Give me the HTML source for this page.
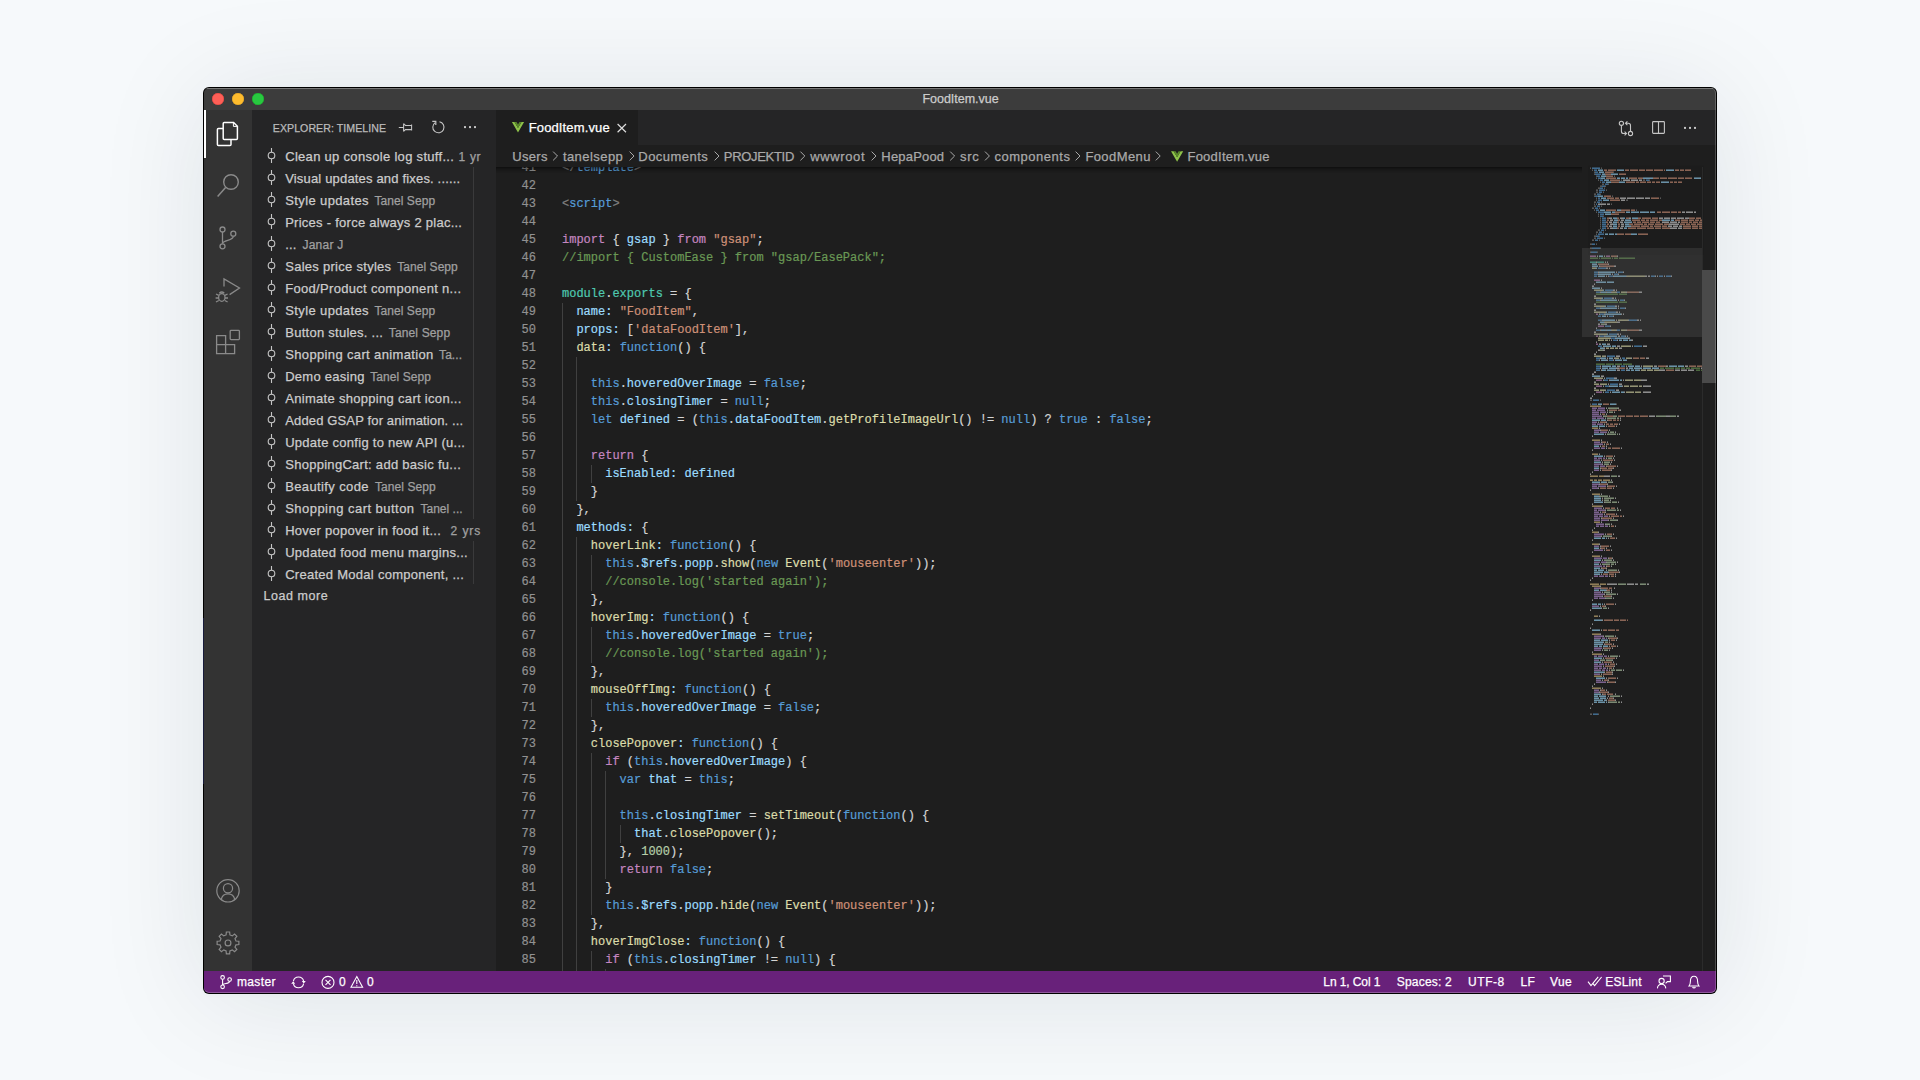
<!DOCTYPE html><html><head><meta charset="utf-8"><style>
*{margin:0;padding:0;box-sizing:border-box}
html,body{width:1920px;height:1080px;overflow:hidden;background:#f6f9fb;font-family:"Liberation Sans",sans-serif}
#bgshade{position:absolute;left:0;top:0;width:1920px;height:1080px;background:#f6f9fb}
#win{position:absolute;left:204px;top:88px;width:1512px;height:905px;border-radius:5px;overflow:hidden;background:#1e1e1e;box-shadow:0 0 0 1px #000, 0 6px 110px rgba(10,30,50,0.10), 0 1px 6px rgba(10,30,50,0.03)}
#o{position:absolute;left:-204px;top:-88px;width:1920px;height:1080px}
.r{position:absolute}
.t{position:absolute;white-space:pre;line-height:16px;-webkit-text-stroke:0.25px currentColor}
.code{font-family:"Liberation Mono",monospace;font-size:12px;white-space:pre;line-height:18px;-webkit-text-stroke:0.2px currentColor}
.ln{position:absolute;left:476px;width:60px;text-align:right;color:#919191;height:18px}
.cl{position:absolute;left:562px;height:18px}
.ig{position:absolute;width:1px;height:18px;background:#404040}
svg{position:absolute;left:0;top:0;overflow:visible}
</style></head><body><div id="bgshade"></div><div id="win"><div id="o"><div class="r" style="left:203px;top:87px;width:1514px;height:23px;background:#3c3c3c;"></div><div class="r" style="left:203px;top:88px;width:1514px;height:1px;background:#787878;"></div><div class="r" style="left:204px;top:110px;width:48px;height:861px;background:#333333;"></div><div class="r" style="left:252px;top:110px;width:244px;height:861px;background:#252526;"></div><div class="r" style="left:496px;top:110px;width:1221px;height:35px;background:#252526;"></div><div class="r" style="left:496px;top:110px;width:142px;height:35px;background:#1e1e1e;"></div><div class="r" style="left:496px;top:145px;width:1221px;height:22px;background:#1e1e1e;"></div><div class="r" style="left:496px;top:167px;width:1221px;height:804px;background:#1e1e1e;"></div><div class="r" style="left:203px;top:971px;width:1514px;height:23px;background:#68217a;"></div><div class="r" style="left:212px;top:93px;width:12px;height:12px;border-radius:50%;background:#fe5f57;box-shadow:inset 0 0 0 0.5px #e0443e"></div><div class="r" style="left:232px;top:93px;width:12px;height:12px;border-radius:50%;background:#febc2e;box-shadow:inset 0 0 0 0.5px #dea123"></div><div class="r" style="left:252px;top:93px;width:12px;height:12px;border-radius:50%;background:#28c840;box-shadow:inset 0 0 0 0.5px #1aab29"></div><div class="r" style="left:204px;top:110px;width:2px;height:48px;background:#ffffff;"></div><div class="r" style="left:496px;top:167px;width:1221px;height:804px;overflow:hidden"><div class="r" style="left:-496px;top:-167px;width:1920px;height:1080px"><div class="ln code" style="top:159px">41</div><div class="cl code" style="top:159px"><span style="color:#808080">&lt;/</span><span style="color:#569cd6">template</span><span style="color:#808080">&gt;</span></div><div class="ln code" style="top:177px">42</div><div class="cl code" style="top:177px"></div><div class="ln code" style="top:195px">43</div><div class="cl code" style="top:195px"><span style="color:#808080">&lt;</span><span style="color:#569cd6">script</span><span style="color:#808080">&gt;</span></div><div class="ln code" style="top:213px">44</div><div class="cl code" style="top:213px"></div><div class="ln code" style="top:231px">45</div><div class="cl code" style="top:231px"><span style="color:#c586c0">import</span><span style="color:#d4d4d4"> { </span><span style="color:#9cdcfe">gsap</span><span style="color:#d4d4d4"> } </span><span style="color:#c586c0">from</span><span style="color:#d4d4d4"> </span><span style="color:#ce9178">&quot;gsap&quot;</span><span style="color:#d4d4d4">;</span></div><div class="ln code" style="top:249px">46</div><div class="cl code" style="top:249px"><span style="color:#6a9955">//import { CustomEase } from &quot;gsap/EasePack&quot;;</span></div><div class="ln code" style="top:267px">47</div><div class="cl code" style="top:267px"></div><div class="ln code" style="top:285px">48</div><div class="cl code" style="top:285px"><span style="color:#4ec9b0">module</span><span style="color:#d4d4d4">.</span><span style="color:#4ec9b0">exports</span><span style="color:#d4d4d4"> = {</span></div><div class="ln code" style="top:303px">49</div><div class="ig" style="top:303px;left:562px"></div><div class="cl code" style="top:303px"><span style="color:#d4d4d4">  </span><span style="color:#9cdcfe">name</span><span style="color:#9cdcfe">:</span><span style="color:#d4d4d4"> </span><span style="color:#ce9178">&quot;FoodItem&quot;</span><span style="color:#d4d4d4">,</span></div><div class="ln code" style="top:321px">50</div><div class="ig" style="top:321px;left:562px"></div><div class="cl code" style="top:321px"><span style="color:#d4d4d4">  </span><span style="color:#9cdcfe">props</span><span style="color:#9cdcfe">:</span><span style="color:#d4d4d4"> [</span><span style="color:#ce9178">&#x27;dataFoodItem&#x27;</span><span style="color:#d4d4d4">],</span></div><div class="ln code" style="top:339px">51</div><div class="ig" style="top:339px;left:562px"></div><div class="cl code" style="top:339px"><span style="color:#d4d4d4">  </span><span style="color:#dcdcaa">data</span><span style="color:#9cdcfe">:</span><span style="color:#d4d4d4"> </span><span style="color:#569cd6">function</span><span style="color:#d4d4d4">() {</span></div><div class="ln code" style="top:357px">52</div><div class="ig" style="top:357px;left:562px"></div><div class="ig" style="top:357px;left:576px"></div><div class="cl code" style="top:357px"></div><div class="ln code" style="top:375px">53</div><div class="ig" style="top:375px;left:562px"></div><div class="ig" style="top:375px;left:576px"></div><div class="cl code" style="top:375px"><span style="color:#d4d4d4">    </span><span style="color:#569cd6">this</span><span style="color:#d4d4d4">.</span><span style="color:#9cdcfe">hoveredOverImage</span><span style="color:#d4d4d4"> = </span><span style="color:#569cd6">false</span><span style="color:#d4d4d4">;</span></div><div class="ln code" style="top:393px">54</div><div class="ig" style="top:393px;left:562px"></div><div class="ig" style="top:393px;left:576px"></div><div class="cl code" style="top:393px"><span style="color:#d4d4d4">    </span><span style="color:#569cd6">this</span><span style="color:#d4d4d4">.</span><span style="color:#9cdcfe">closingTimer</span><span style="color:#d4d4d4"> = </span><span style="color:#569cd6">null</span><span style="color:#d4d4d4">;</span></div><div class="ln code" style="top:411px">55</div><div class="ig" style="top:411px;left:562px"></div><div class="ig" style="top:411px;left:576px"></div><div class="cl code" style="top:411px"><span style="color:#d4d4d4">    </span><span style="color:#569cd6">let</span><span style="color:#d4d4d4"> </span><span style="color:#9cdcfe">defined</span><span style="color:#d4d4d4"> = (</span><span style="color:#569cd6">this</span><span style="color:#d4d4d4">.</span><span style="color:#9cdcfe">dataFoodItem</span><span style="color:#d4d4d4">.</span><span style="color:#dcdcaa">getProfileImageUrl</span><span style="color:#d4d4d4">() != </span><span style="color:#569cd6">null</span><span style="color:#d4d4d4">) ? </span><span style="color:#569cd6">true</span><span style="color:#d4d4d4"> : </span><span style="color:#569cd6">false</span><span style="color:#d4d4d4">;</span></div><div class="ln code" style="top:429px">56</div><div class="ig" style="top:429px;left:562px"></div><div class="ig" style="top:429px;left:576px"></div><div class="cl code" style="top:429px"></div><div class="ln code" style="top:447px">57</div><div class="ig" style="top:447px;left:562px"></div><div class="ig" style="top:447px;left:576px"></div><div class="cl code" style="top:447px"><span style="color:#d4d4d4">    </span><span style="color:#c586c0">return</span><span style="color:#d4d4d4"> {</span></div><div class="ln code" style="top:465px">58</div><div class="ig" style="top:465px;left:562px"></div><div class="ig" style="top:465px;left:576px"></div><div class="ig" style="top:465px;left:591px"></div><div class="cl code" style="top:465px"><span style="color:#d4d4d4">      </span><span style="color:#9cdcfe">isEnabled</span><span style="color:#9cdcfe">:</span><span style="color:#d4d4d4"> </span><span style="color:#9cdcfe">defined</span></div><div class="ln code" style="top:483px">59</div><div class="ig" style="top:483px;left:562px"></div><div class="ig" style="top:483px;left:576px"></div><div class="cl code" style="top:483px"><span style="color:#d4d4d4">    }</span></div><div class="ln code" style="top:501px">60</div><div class="ig" style="top:501px;left:562px"></div><div class="cl code" style="top:501px"><span style="color:#d4d4d4">  },</span></div><div class="ln code" style="top:519px">61</div><div class="ig" style="top:519px;left:562px"></div><div class="cl code" style="top:519px"><span style="color:#d4d4d4">  </span><span style="color:#9cdcfe">methods</span><span style="color:#9cdcfe">:</span><span style="color:#d4d4d4"> {</span></div><div class="ln code" style="top:537px">62</div><div class="ig" style="top:537px;left:562px"></div><div class="ig" style="top:537px;left:576px"></div><div class="cl code" style="top:537px"><span style="color:#d4d4d4">    </span><span style="color:#dcdcaa">hoverLink</span><span style="color:#9cdcfe">:</span><span style="color:#d4d4d4"> </span><span style="color:#569cd6">function</span><span style="color:#d4d4d4">() {</span></div><div class="ln code" style="top:555px">63</div><div class="ig" style="top:555px;left:562px"></div><div class="ig" style="top:555px;left:576px"></div><div class="ig" style="top:555px;left:591px"></div><div class="cl code" style="top:555px"><span style="color:#d4d4d4">      </span><span style="color:#569cd6">this</span><span style="color:#d4d4d4">.</span><span style="color:#9cdcfe">$refs</span><span style="color:#d4d4d4">.</span><span style="color:#9cdcfe">popp</span><span style="color:#d4d4d4">.</span><span style="color:#dcdcaa">show</span><span style="color:#d4d4d4">(</span><span style="color:#569cd6">new</span><span style="color:#d4d4d4"> </span><span style="color:#dcdcaa">Event</span><span style="color:#d4d4d4">(</span><span style="color:#ce9178">&#x27;mouseenter&#x27;</span><span style="color:#d4d4d4">));</span></div><div class="ln code" style="top:573px">64</div><div class="ig" style="top:573px;left:562px"></div><div class="ig" style="top:573px;left:576px"></div><div class="ig" style="top:573px;left:591px"></div><div class="cl code" style="top:573px"><span style="color:#d4d4d4">      </span><span style="color:#6a9955">//console.log(&#x27;started again&#x27;);</span></div><div class="ln code" style="top:591px">65</div><div class="ig" style="top:591px;left:562px"></div><div class="ig" style="top:591px;left:576px"></div><div class="cl code" style="top:591px"><span style="color:#d4d4d4">    },</span></div><div class="ln code" style="top:609px">66</div><div class="ig" style="top:609px;left:562px"></div><div class="ig" style="top:609px;left:576px"></div><div class="cl code" style="top:609px"><span style="color:#d4d4d4">    </span><span style="color:#dcdcaa">hoverImg</span><span style="color:#9cdcfe">:</span><span style="color:#d4d4d4"> </span><span style="color:#569cd6">function</span><span style="color:#d4d4d4">() {</span></div><div class="ln code" style="top:627px">67</div><div class="ig" style="top:627px;left:562px"></div><div class="ig" style="top:627px;left:576px"></div><div class="ig" style="top:627px;left:591px"></div><div class="cl code" style="top:627px"><span style="color:#d4d4d4">      </span><span style="color:#569cd6">this</span><span style="color:#d4d4d4">.</span><span style="color:#9cdcfe">hoveredOverImage</span><span style="color:#d4d4d4"> = </span><span style="color:#569cd6">true</span><span style="color:#d4d4d4">;</span></div><div class="ln code" style="top:645px">68</div><div class="ig" style="top:645px;left:562px"></div><div class="ig" style="top:645px;left:576px"></div><div class="ig" style="top:645px;left:591px"></div><div class="cl code" style="top:645px"><span style="color:#d4d4d4">      </span><span style="color:#6a9955">//console.log(&#x27;started again&#x27;);</span></div><div class="ln code" style="top:663px">69</div><div class="ig" style="top:663px;left:562px"></div><div class="ig" style="top:663px;left:576px"></div><div class="cl code" style="top:663px"><span style="color:#d4d4d4">    },</span></div><div class="ln code" style="top:681px">70</div><div class="ig" style="top:681px;left:562px"></div><div class="ig" style="top:681px;left:576px"></div><div class="cl code" style="top:681px"><span style="color:#d4d4d4">    </span><span style="color:#dcdcaa">mouseOffImg</span><span style="color:#9cdcfe">:</span><span style="color:#d4d4d4"> </span><span style="color:#569cd6">function</span><span style="color:#d4d4d4">() {</span></div><div class="ln code" style="top:699px">71</div><div class="ig" style="top:699px;left:562px"></div><div class="ig" style="top:699px;left:576px"></div><div class="ig" style="top:699px;left:591px"></div><div class="cl code" style="top:699px"><span style="color:#d4d4d4">      </span><span style="color:#569cd6">this</span><span style="color:#d4d4d4">.</span><span style="color:#9cdcfe">hoveredOverImage</span><span style="color:#d4d4d4"> = </span><span style="color:#569cd6">false</span><span style="color:#d4d4d4">;</span></div><div class="ln code" style="top:717px">72</div><div class="ig" style="top:717px;left:562px"></div><div class="ig" style="top:717px;left:576px"></div><div class="cl code" style="top:717px"><span style="color:#d4d4d4">    },</span></div><div class="ln code" style="top:735px">73</div><div class="ig" style="top:735px;left:562px"></div><div class="ig" style="top:735px;left:576px"></div><div class="cl code" style="top:735px"><span style="color:#d4d4d4">    </span><span style="color:#dcdcaa">closePopover</span><span style="color:#9cdcfe">:</span><span style="color:#d4d4d4"> </span><span style="color:#569cd6">function</span><span style="color:#d4d4d4">() {</span></div><div class="ln code" style="top:753px">74</div><div class="ig" style="top:753px;left:562px"></div><div class="ig" style="top:753px;left:576px"></div><div class="ig" style="top:753px;left:591px"></div><div class="cl code" style="top:753px"><span style="color:#d4d4d4">      </span><span style="color:#c586c0">if</span><span style="color:#d4d4d4"> (</span><span style="color:#569cd6">this</span><span style="color:#d4d4d4">.</span><span style="color:#9cdcfe">hoveredOverImage</span><span style="color:#d4d4d4">) {</span></div><div class="ln code" style="top:771px">75</div><div class="ig" style="top:771px;left:562px"></div><div class="ig" style="top:771px;left:576px"></div><div class="ig" style="top:771px;left:591px"></div><div class="ig" style="top:771px;left:605px"></div><div class="cl code" style="top:771px"><span style="color:#d4d4d4">        </span><span style="color:#569cd6">var</span><span style="color:#d4d4d4"> </span><span style="color:#9cdcfe">that</span><span style="color:#d4d4d4"> = </span><span style="color:#569cd6">this</span><span style="color:#d4d4d4">;</span></div><div class="ln code" style="top:789px">76</div><div class="ig" style="top:789px;left:562px"></div><div class="ig" style="top:789px;left:576px"></div><div class="ig" style="top:789px;left:591px"></div><div class="ig" style="top:789px;left:605px"></div><div class="cl code" style="top:789px"></div><div class="ln code" style="top:807px">77</div><div class="ig" style="top:807px;left:562px"></div><div class="ig" style="top:807px;left:576px"></div><div class="ig" style="top:807px;left:591px"></div><div class="ig" style="top:807px;left:605px"></div><div class="cl code" style="top:807px"><span style="color:#d4d4d4">        </span><span style="color:#569cd6">this</span><span style="color:#d4d4d4">.</span><span style="color:#9cdcfe">closingTimer</span><span style="color:#d4d4d4"> = </span><span style="color:#dcdcaa">setTimeout</span><span style="color:#d4d4d4">(</span><span style="color:#569cd6">function</span><span style="color:#d4d4d4">() {</span></div><div class="ln code" style="top:825px">78</div><div class="ig" style="top:825px;left:562px"></div><div class="ig" style="top:825px;left:576px"></div><div class="ig" style="top:825px;left:591px"></div><div class="ig" style="top:825px;left:605px"></div><div class="ig" style="top:825px;left:620px"></div><div class="cl code" style="top:825px"><span style="color:#d4d4d4">          </span><span style="color:#9cdcfe">that</span><span style="color:#d4d4d4">.</span><span style="color:#dcdcaa">closePopover</span><span style="color:#d4d4d4">();</span></div><div class="ln code" style="top:843px">79</div><div class="ig" style="top:843px;left:562px"></div><div class="ig" style="top:843px;left:576px"></div><div class="ig" style="top:843px;left:591px"></div><div class="ig" style="top:843px;left:605px"></div><div class="cl code" style="top:843px"><span style="color:#d4d4d4">        }, </span><span style="color:#b5cea8">1000</span><span style="color:#d4d4d4">);</span></div><div class="ln code" style="top:861px">80</div><div class="ig" style="top:861px;left:562px"></div><div class="ig" style="top:861px;left:576px"></div><div class="ig" style="top:861px;left:591px"></div><div class="ig" style="top:861px;left:605px"></div><div class="cl code" style="top:861px"><span style="color:#d4d4d4">        </span><span style="color:#c586c0">return</span><span style="color:#d4d4d4"> </span><span style="color:#569cd6">false</span><span style="color:#d4d4d4">;</span></div><div class="ln code" style="top:879px">81</div><div class="ig" style="top:879px;left:562px"></div><div class="ig" style="top:879px;left:576px"></div><div class="ig" style="top:879px;left:591px"></div><div class="cl code" style="top:879px"><span style="color:#d4d4d4">      }</span></div><div class="ln code" style="top:897px">82</div><div class="ig" style="top:897px;left:562px"></div><div class="ig" style="top:897px;left:576px"></div><div class="ig" style="top:897px;left:591px"></div><div class="cl code" style="top:897px"><span style="color:#d4d4d4">      </span><span style="color:#569cd6">this</span><span style="color:#d4d4d4">.</span><span style="color:#9cdcfe">$refs</span><span style="color:#d4d4d4">.</span><span style="color:#9cdcfe">popp</span><span style="color:#d4d4d4">.</span><span style="color:#dcdcaa">hide</span><span style="color:#d4d4d4">(</span><span style="color:#569cd6">new</span><span style="color:#d4d4d4"> </span><span style="color:#dcdcaa">Event</span><span style="color:#d4d4d4">(</span><span style="color:#ce9178">&#x27;mouseenter&#x27;</span><span style="color:#d4d4d4">));</span></div><div class="ln code" style="top:915px">83</div><div class="ig" style="top:915px;left:562px"></div><div class="ig" style="top:915px;left:576px"></div><div class="cl code" style="top:915px"><span style="color:#d4d4d4">    },</span></div><div class="ln code" style="top:933px">84</div><div class="ig" style="top:933px;left:562px"></div><div class="ig" style="top:933px;left:576px"></div><div class="cl code" style="top:933px"><span style="color:#d4d4d4">    </span><span style="color:#dcdcaa">hoverImgClose</span><span style="color:#9cdcfe">:</span><span style="color:#d4d4d4"> </span><span style="color:#569cd6">function</span><span style="color:#d4d4d4">() {</span></div><div class="ln code" style="top:951px">85</div><div class="ig" style="top:951px;left:562px"></div><div class="ig" style="top:951px;left:576px"></div><div class="ig" style="top:951px;left:591px"></div><div class="cl code" style="top:951px"><span style="color:#d4d4d4">      </span><span style="color:#c586c0">if</span><span style="color:#d4d4d4"> (</span><span style="color:#569cd6">this</span><span style="color:#d4d4d4">.</span><span style="color:#9cdcfe">closingTimer</span><span style="color:#d4d4d4"> != </span><span style="color:#569cd6">null</span><span style="color:#d4d4d4">) {</span></div><div class="ln code" style="top:969px">86</div><div class="ig" style="top:969px;left:562px"></div><div class="ig" style="top:969px;left:576px"></div><div class="ig" style="top:969px;left:591px"></div><div class="ig" style="top:969px;left:605px"></div><div class="cl code" style="top:969px"><span style="color:#d4d4d4">        </span><span style="color:#dcdcaa">clearTimeout</span><span style="color:#d4d4d4">(</span><span style="color:#569cd6">this</span><span style="color:#d4d4d4">.</span><span style="color:#9cdcfe">closingTimer</span><span style="color:#d4d4d4">);</span></div></div></div><div class="r" style="left:496px;top:167px;width:1086px;height:6px;background:transparent;box-shadow:inset 0 6px 6px -6px #000"></div><div class="r" style="left:473px;top:167px;width:1px;height:352px;background:#3a3a3b;"></div><div class="r" style="left:473px;top:541px;width:1px;height:43px;background:#3a3a3b;"></div><div class="r" style="left:1702px;top:167px;width:14px;height:804px;background:#1e1e1e;box-shadow:inset 1px 0 0 #2b2b2b"></div><div class="r" style="left:1702px;top:270px;width:14px;height:113px;background:#4a4a4a;"></div><svg width="1920" height="1080"><circle cx="271.5" cy="155.5" r="3.3" fill="none" stroke="#c5c5c5" stroke-width="1.1"/><path d="M271.5 148.0 V152.2 M271.5 158.8 V163.0" stroke="#c5c5c5" stroke-width="1.1"/><circle cx="271.5" cy="177.5" r="3.3" fill="none" stroke="#c5c5c5" stroke-width="1.1"/><path d="M271.5 170.0 V174.2 M271.5 180.8 V185.0" stroke="#c5c5c5" stroke-width="1.1"/><circle cx="271.5" cy="199.5" r="3.3" fill="none" stroke="#c5c5c5" stroke-width="1.1"/><path d="M271.5 192.0 V196.2 M271.5 202.8 V207.0" stroke="#c5c5c5" stroke-width="1.1"/><circle cx="271.5" cy="221.5" r="3.3" fill="none" stroke="#c5c5c5" stroke-width="1.1"/><path d="M271.5 214.0 V218.2 M271.5 224.8 V229.0" stroke="#c5c5c5" stroke-width="1.1"/><circle cx="271.5" cy="243.5" r="3.3" fill="none" stroke="#c5c5c5" stroke-width="1.1"/><path d="M271.5 236.0 V240.2 M271.5 246.8 V251.0" stroke="#c5c5c5" stroke-width="1.1"/><circle cx="271.5" cy="265.5" r="3.3" fill="none" stroke="#c5c5c5" stroke-width="1.1"/><path d="M271.5 258.0 V262.2 M271.5 268.8 V273.0" stroke="#c5c5c5" stroke-width="1.1"/><circle cx="271.5" cy="287.5" r="3.3" fill="none" stroke="#c5c5c5" stroke-width="1.1"/><path d="M271.5 280.0 V284.2 M271.5 290.8 V295.0" stroke="#c5c5c5" stroke-width="1.1"/><circle cx="271.5" cy="309.5" r="3.3" fill="none" stroke="#c5c5c5" stroke-width="1.1"/><path d="M271.5 302.0 V306.2 M271.5 312.8 V317.0" stroke="#c5c5c5" stroke-width="1.1"/><circle cx="271.5" cy="331.5" r="3.3" fill="none" stroke="#c5c5c5" stroke-width="1.1"/><path d="M271.5 324.0 V328.2 M271.5 334.8 V339.0" stroke="#c5c5c5" stroke-width="1.1"/><circle cx="271.5" cy="353.5" r="3.3" fill="none" stroke="#c5c5c5" stroke-width="1.1"/><path d="M271.5 346.0 V350.2 M271.5 356.8 V361.0" stroke="#c5c5c5" stroke-width="1.1"/><circle cx="271.5" cy="375.5" r="3.3" fill="none" stroke="#c5c5c5" stroke-width="1.1"/><path d="M271.5 368.0 V372.2 M271.5 378.8 V383.0" stroke="#c5c5c5" stroke-width="1.1"/><circle cx="271.5" cy="397.5" r="3.3" fill="none" stroke="#c5c5c5" stroke-width="1.1"/><path d="M271.5 390.0 V394.2 M271.5 400.8 V405.0" stroke="#c5c5c5" stroke-width="1.1"/><circle cx="271.5" cy="419.5" r="3.3" fill="none" stroke="#c5c5c5" stroke-width="1.1"/><path d="M271.5 412.0 V416.2 M271.5 422.8 V427.0" stroke="#c5c5c5" stroke-width="1.1"/><circle cx="271.5" cy="441.5" r="3.3" fill="none" stroke="#c5c5c5" stroke-width="1.1"/><path d="M271.5 434.0 V438.2 M271.5 444.8 V449.0" stroke="#c5c5c5" stroke-width="1.1"/><circle cx="271.5" cy="463.5" r="3.3" fill="none" stroke="#c5c5c5" stroke-width="1.1"/><path d="M271.5 456.0 V460.2 M271.5 466.8 V471.0" stroke="#c5c5c5" stroke-width="1.1"/><circle cx="271.5" cy="485.5" r="3.3" fill="none" stroke="#c5c5c5" stroke-width="1.1"/><path d="M271.5 478.0 V482.2 M271.5 488.8 V493.0" stroke="#c5c5c5" stroke-width="1.1"/><circle cx="271.5" cy="507.5" r="3.3" fill="none" stroke="#c5c5c5" stroke-width="1.1"/><path d="M271.5 500.0 V504.2 M271.5 510.8 V515.0" stroke="#c5c5c5" stroke-width="1.1"/><circle cx="271.5" cy="529.5" r="3.3" fill="none" stroke="#c5c5c5" stroke-width="1.1"/><path d="M271.5 522.0 V526.2 M271.5 532.8 V537.0" stroke="#c5c5c5" stroke-width="1.1"/><circle cx="271.5" cy="551.5" r="3.3" fill="none" stroke="#c5c5c5" stroke-width="1.1"/><path d="M271.5 544.0 V548.2 M271.5 554.8 V559.0" stroke="#c5c5c5" stroke-width="1.1"/><circle cx="271.5" cy="573.5" r="3.3" fill="none" stroke="#c5c5c5" stroke-width="1.1"/><path d="M271.5 566.0 V570.2 M271.5 576.8 V581.0" stroke="#c5c5c5" stroke-width="1.1"/><path d="M398.8 127.5 H403.6 M403.6 123.4 V131.6 M403.6 123.6 L405.4 125.4 H411.6 M403.6 131.4 L405.4 129.6 H411.6 M411.6 124.4 V130.6" fill="none" stroke="#c5c5c5" stroke-width="1.05"/><path d="M435.2 122.6 A5.6 5.6 0 1 0 439.5 121.7" fill="none" stroke="#c5c5c5" stroke-width="1.1" transform="rotate(0)"/><path d="M432.3 121.4 H435.8 V124.9" fill="none" stroke="#c5c5c5" stroke-width="1.2"/><rect x="464.0" y="126.1" width="2" height="2" fill="#c5c5c5"/><rect x="469.0" y="126.1" width="2" height="2" fill="#c5c5c5"/><rect x="474.0" y="126.1" width="2" height="2" fill="#c5c5c5"/><path d="M224.2 122.4 H233.6 L237.4 126.2 V138.6 Q237.4 139.6 236.4 139.6 H224.2 Q223.2 139.6 223.2 138.6 V123.4 Q223.2 122.4 224.2 122.4 Z" fill="none" stroke="#ffffff" stroke-width="1.5"/><path d="M233.4 122.6 V126.4 H237.2" fill="none" stroke="#ffffff" stroke-width="1"/><path d="M223.2 128.6 H218.4 Q217.4 128.6 217.4 129.6 V144.6 Q217.4 145.6 218.4 145.6 H230 Q231 145.6 231 144.6 V139.6" fill="none" stroke="#ffffff" stroke-width="1.5"/><circle cx="231" cy="182" r="7.3" fill="none" stroke="#8a8a8a" stroke-width="1.4"/><path d="M225.6 187.6 L217.6 196.6" stroke="#8a8a8a" stroke-width="1.5"/><g fill="none" stroke="#8a8a8a" stroke-width="1.3"><circle cx="222.5" cy="229.5" r="2.5"/><circle cx="233.3" cy="233.7" r="2.5"/><circle cx="222.5" cy="246.3" r="2.5"/><path d="M222.5 232 V243.8 M233.3 236.2 C233.3 241 223 239.5 222.5 243.6"/></g><g fill="none" stroke="#8a8a8a" stroke-width="1.3"><path d="M224 286.5 V279 L239.5 288 L229.6 294.6"/><ellipse cx="221.8" cy="297.5" rx="3.2" ry="3.8"/><path d="M219.3 293.2 Q221.8 290.8 224.3 293.2 M216 294 L218.8 295.3 M215.6 298 H218.6 M216 302 L218.8 300.5 M227.6 294 L224.8 295.3 M228 298 H225 M227.6 302 L224.8 300.5"/></g><g fill="none" stroke="#8a8a8a" stroke-width="1.3"><path d="M216.6 335.6 H225.6 V353.6 H216.6 Z M216.6 344.6 H234.6 V353.6 H225.6"/><rect x="230.2" y="330.4" width="9.2" height="9.2" rx="0.8"/></g><g fill="none" stroke="#8a8a8a" stroke-width="1.2"><circle cx="228" cy="890.8" r="11.2"/><circle cx="228" cy="888.2" r="4.6"/><path d="M221.2 899.6 C222 895.5 224.8 893.8 228 893.8 C231.2 893.8 234 895.5 234.8 899.6"/></g><g fill="none" stroke="#8a8a8a" stroke-width="1.2"><path d="M226.09 934.93 L226.36 932.02 L229.64 932.02 L229.91 934.93 L232.28 935.91 L234.54 934.05 L236.85 936.36 L234.99 938.62 L235.97 940.99 L238.88 941.26 L238.88 944.54 L235.97 944.81 L234.99 947.18 L236.85 949.44 L234.54 951.75 L232.28 949.89 L229.91 950.87 L229.64 953.78 L226.36 953.78 L226.09 950.87 L223.72 949.89 L221.46 951.75 L219.15 949.44 L221.01 947.18 L220.03 944.81 L217.12 944.54 L217.12 941.26 L220.03 940.99 L221.01 938.62 L219.15 936.36 L221.46 934.05 L223.72 935.91 Z"/><circle cx="228" cy="942.9" r="2.9"/></g><g transform="translate(511.90 121.90) scale(1.000)"><path d="M0 0 H2.6 L6.1 6 L9.6 0 H12.2 L6.1 10.6 Z" fill="#8dc149"/><path d="M2.6 0 H4.6 L6.1 2.6 L7.6 0 H9.6 L6.1 6 Z" fill="#5a8a2a"/></g><path d="M617.6 124 L626 132.2 M626 124 L617.6 132.2" stroke="#dddddd" stroke-width="1.2"/><g fill="none" stroke="#c5c5c5" stroke-width="1.1"><circle cx="1621.4" cy="123.3" r="2.1"/><circle cx="1630.5" cy="133.5" r="2.1"/><path d="M1621.4 125.4 V131.2 Q1621.4 133.5 1623.7 133.5 H1626.4 M1624.6 131.6 L1626.5 133.5 L1624.6 135.4"/><path d="M1630.5 131.4 V125.6 Q1630.5 123.3 1628.2 123.3 H1625.6 M1627.4 121.4 L1625.5 123.3 L1627.4 125.2"/></g><g fill="none" stroke="#c5c5c5" stroke-width="1.1"><rect x="1652.6" y="121.6" width="11.8" height="11.8" rx="0.8"/><path d="M1658.5 121.6 V133.4"/></g><rect x="1684.0" y="126.9" width="2" height="2" fill="#c5c5c5"/><rect x="1689.0" y="126.9" width="2" height="2" fill="#c5c5c5"/><rect x="1694.0" y="126.9" width="2" height="2" fill="#c5c5c5"/><path d="M553.1 151.6 L557.5 156 L553.1 160.4" fill="none" stroke="#a9a9a9" stroke-width="1"/><path d="M629.6 151.6 L634.0 156 L629.6 160.4" fill="none" stroke="#a9a9a9" stroke-width="1"/><path d="M714.6 151.6 L719.0 156 L714.6 160.4" fill="none" stroke="#a9a9a9" stroke-width="1"/><path d="M800.4 151.6 L804.8 156 L800.4 160.4" fill="none" stroke="#a9a9a9" stroke-width="1"/><path d="M871.6 151.6 L876.0 156 L871.6 160.4" fill="none" stroke="#a9a9a9" stroke-width="1"/><path d="M950.2 151.6 L954.6 156 L950.2 160.4" fill="none" stroke="#a9a9a9" stroke-width="1"/><path d="M985.0 151.6 L989.4 156 L985.0 160.4" fill="none" stroke="#a9a9a9" stroke-width="1"/><path d="M1075.6 151.6 L1080.0 156 L1075.6 160.4" fill="none" stroke="#a9a9a9" stroke-width="1"/><path d="M1155.8 151.6 L1160.2 156 L1155.8 160.4" fill="none" stroke="#a9a9a9" stroke-width="1"/><g transform="translate(1171.00 151.20) scale(1.000)"><path d="M0 0 H2.6 L6.1 6 L9.6 0 H12.2 L6.1 10.6 Z" fill="#8dc149"/><path d="M2.6 0 H4.6 L6.1 2.6 L7.6 0 H9.6 L6.1 6 Z" fill="#5a8a2a"/></g><g><g opacity="0.61" transform="translate(0 1)"><path stroke="#808080" stroke-width="1" d="M1590 167.5h1M1601 167.5h1M1592 169.5h1M1594 171.5h1M1613 171.5h1M1594 173.5h1M1596 175.5h1M1614 175.5h1M1596 177.5h1M1598 179.5h1M1621 179.5h1M1643 179.5h2M1649 179.5h1M1600 181.5h1M1602 183.5h2M1608 183.5h1M1600 185.5h2M1605 185.5h1M1598 187.5h2M1604 187.5h1M1596 189.5h2M1606 189.5h1M1596 191.5h2M1603 191.5h1M1594 193.5h2M1600 193.5h1M1594 195.5h1M1612 195.5h1M1596 197.5h1M1660 197.5h1M1596 199.5h1M1626 199.5h2M1594 201.5h2M1601 201.5h1M1594 203.5h1M1611 203.5h1M1594 205.5h2M1601 205.5h1M1592 207.5h2M1599 207.5h1M1594 209.5h1M1636 209.5h1M1596 211.5h1M1598 213.5h1M1598 215.5h1M1603 215.5h1M1600 217.5h1M1600 219.5h1M1600 221.5h1M1600 223.5h1M1600 225.5h1M1600 227.5h1M1598 229.5h2M1605 229.5h1M1596 231.5h2M1603 231.5h1M1596 233.5h1M1594 235.5h2M1599 235.5h1M1594 237.5h2M1604 237.5h1M1592 239.5h2M1599 239.5h1M1590 243.5h2M1596 243.5h1M1590 247.5h2M1600 247.5h1M1590 251.5h1M1597 251.5h1M1590 399.5h2M1600 399.5h1M1590 403.5h1M1616 403.5h1M1590 713.5h2M1598 713.5h1"/><path stroke="#569cd6" stroke-width="1" d="M1592 167.5h8M1594 169.5h3M1595 171.5h3M1595 173.5h6M1597 175.5h3M1598 177.5h3M1600 179.5h3M1646 179.5h3M1602 181.5h3M1605 183.5h3M1602 185.5h3M1600 187.5h3M1599 189.5h6M1599 191.5h3M1597 193.5h3M1595 195.5h3M1598 197.5h2M1598 199.5h4M1597 201.5h3M1596 203.5h1M1597 205.5h3M1595 207.5h3M1596 209.5h3M1598 211.5h6M1600 213.5h4M1600 215.5h3M1602 217.5h4M1602 219.5h4M1602 221.5h4M1602 223.5h4M1602 225.5h4M1602 227.5h4M1601 229.5h3M1599 231.5h3M1598 233.5h6M1596 235.5h3M1597 237.5h6M1595 239.5h3M1592 243.5h3M1592 247.5h8M1591 251.5h6M1598 267.5h8M1594 271.5h4M1618 271.5h5M1594 273.5h4M1614 273.5h4M1594 275.5h3M1609 275.5h4M1651 275.5h4M1659 275.5h4M1666 275.5h5M1605 289.5h8M1596 291.5h4M1617 291.5h3M1604 297.5h8M1596 299.5h4M1620 299.5h4M1607 305.5h8M1596 307.5h4M1620 307.5h5M1608 311.5h8M1600 313.5h4M1598 315.5h3M1609 315.5h4M1598 319.5h4M1629 319.5h8M1605 325.5h5M1596 329.5h4M1617 329.5h3M1609 333.5h8M1600 335.5h4M1621 335.5h4M1611 337.5h4M1613 339.5h4M1598 345.5h4M1634 345.5h8M1607 355.5h8M1596 357.5h4M1622 357.5h3M1596 359.5h3M1609 359.5h4M1596 365.5h4M1621 365.5h4M1596 367.5h4M1596 369.5h4M1621 369.5h4M1606 377.5h8M1604 379.5h4M1610 383.5h8M1605 385.5h4M1607 389.5h8M1605 391.5h4M1593 399.5h6M1592 403.5h5M1593 713.5h5"/><path stroke="#9cdcfe" stroke-width="1" d="M1598 169.5h5M1617 169.5h7M1666 169.5h8M1599 171.5h5M1602 173.5h3M1611 173.5h7M1601 175.5h5M1601 177.5h4M1617 177.5h3M1621 177.5h4M1626 177.5h2M1643 177.5h10M1694 177.5h7M1604 179.5h5M1606 181.5h5M1619 181.5h6M1661 181.5h8M1598 195.5h5M1601 197.5h5M1603 199.5h6M1600 209.5h5M1617 209.5h4M1604 211.5h7M1612 211.5h3M1626 211.5h4M1631 211.5h8M1640 211.5h9M1650 211.5h5M1605 213.5h6M1613 217.5h4M1623 217.5h2M1632 217.5h6M1614 219.5h4M1625 219.5h6M1662 219.5h8M1671 219.5h3M1613 221.5h4M1624 221.5h8M1613 223.5h4M1625 223.5h4M1613 225.5h4M1625 225.5h6M1613 227.5h4M1624 227.5h3M1605 233.5h3M1609 233.5h5M1615 233.5h2M1631 233.5h6M1599 255.5h4M1592 263.5h4M1596 263.5h1M1592 265.5h5M1597 265.5h1M1596 267.5h1M1599 271.5h16M1599 273.5h12M1598 275.5h7M1614 275.5h12M1596 281.5h9M1605 281.5h1M1607 281.5h7M1592 287.5h7M1599 287.5h1M1603 289.5h1M1601 291.5h5M1607 291.5h4M1602 297.5h1M1601 299.5h16M1605 305.5h1M1601 307.5h16M1606 311.5h1M1605 313.5h16M1602 315.5h4M1603 319.5h12M1600 321.5h4M1601 329.5h5M1607 329.5h4M1607 333.5h1M1605 335.5h12M1616 337.5h12M1619 339.5h3M1623 339.5h5M1629 339.5h2M1602 343.5h4M1604 345.5h7M1612 345.5h4M1600 347.5h4M1601 357.5h5M1609 357.5h4M1601 359.5h6M1615 359.5h7M1623 359.5h4M1602 365.5h9M1612 365.5h4M1628 365.5h6M1635 365.5h5M1669 365.5h8M1678 365.5h6M1602 367.5h6M1609 367.5h7M1629 367.5h4M1634 367.5h8M1643 367.5h8M1652 367.5h7M1602 369.5h4M1607 369.5h9M1627 369.5h3M1631 369.5h3M1635 369.5h4M1592 375.5h8M1610 379.5h9M1620 379.5h2M1610 385.5h8M1619 385.5h3M1612 391.5h8M1621 391.5h3M1598 403.5h4M1610 403.5h6M1592 419.5h8M1601 419.5h5M1592 425.5h6M1599 425.5h6M1594 433.5h10M1594 445.5h5M1594 455.5h9M1594 461.5h7M1594 467.5h5M1592 481.5h8M1601 481.5h5M1594 495.5h5M1594 497.5h7M1594 499.5h7M1594 501.5h9M1594 537.5h7M1602 537.5h3M1606 537.5h1M1594 547.5h5M1594 559.5h7M1594 563.5h5M1594 567.5h6M1594 569.5h3M1598 569.5h6M1594 571.5h9M1604 571.5h4M1594 573.5h6M1594 589.5h5M1600 589.5h6M1592 603.5h5M1598 603.5h3M1602 603.5h1M1592 607.5h9M1594 619.5h8M1592 629.5h8M1594 639.5h6M1601 639.5h7M1594 641.5h9M1594 643.5h9M1594 645.5h4M1599 645.5h3M1603 645.5h5M1594 657.5h8M1594 661.5h7M1594 671.5h10M1596 677.5h9M1594 693.5h7M1594 695.5h4M1599 695.5h7M1594 697.5h5M1600 697.5h6M1594 699.5h9M1604 699.5h2M1594 701.5h3M1598 701.5h7M1606 701.5h1"/><path stroke="#ce9178" stroke-width="1" d="M1604 169.5h3M1608 169.5h8M1625 169.5h4M1630 169.5h8M1639 169.5h6M1646 169.5h7M1654 169.5h9M1664 169.5h1M1675 169.5h4M1680 169.5h4M1685 169.5h6M1605 171.5h8M1605 173.5h6M1619 173.5h7M1606 175.5h7M1606 177.5h10M1629 177.5h8M1638 177.5h5M1653 177.5h6M1660 177.5h7M1668 177.5h9M1678 177.5h6M1685 177.5h7M1610 179.5h10M1611 181.5h8M1626 181.5h9M1636 181.5h3M1640 181.5h6M1647 181.5h4M1652 181.5h3M1656 181.5h4M1670 181.5h3M1674 181.5h3M1678 181.5h4M1604 195.5h7M1607 197.5h7M1615 197.5h4M1651 197.5h8M1610 199.5h10M1606 209.5h10M1621 209.5h9M1631 209.5h4M1615 211.5h10M1657 211.5h4M1662 211.5h8M1671 211.5h6M1678 211.5h3M1611 213.5h8M1607 217.5h2M1617 217.5h2M1626 217.5h3M1638 217.5h3M1642 217.5h9M1652 217.5h6M1689 217.5h6M1696 217.5h5M1607 219.5h2M1618 219.5h2M1632 219.5h8M1641 219.5h4M1646 219.5h3M1650 219.5h8M1659 219.5h3M1675 219.5h5M1681 219.5h7M1689 219.5h5M1695 219.5h4M1700 219.5h2M1606 221.5h2M1617 221.5h2M1633 221.5h3M1637 221.5h4M1642 221.5h7M1650 221.5h5M1656 221.5h4M1681 221.5h7M1689 221.5h3M1693 221.5h5M1699 221.5h3M1607 223.5h2M1618 223.5h2M1629 223.5h4M1634 223.5h9M1644 223.5h3M1648 223.5h6M1655 223.5h8M1664 223.5h5M1680 223.5h5M1686 223.5h4M1691 223.5h5M1697 223.5h5M1606 225.5h2M1618 225.5h2M1631 225.5h9M1641 225.5h8M1650 225.5h3M1654 225.5h7M1662 225.5h5M1683 225.5h8M1692 225.5h6M1699 225.5h3M1607 227.5h2M1617 227.5h2M1628 227.5h8M1637 227.5h9M1647 227.5h7M1655 227.5h6M1662 227.5h8M1683 227.5h8M1692 227.5h6M1699 227.5h3M1617 233.5h7M1625 233.5h6M1638 233.5h10M1611 255.5h6M1598 263.5h10M1600 265.5h14M1627 291.5h12M1627 329.5h12M1633 357.5h6M1640 357.5h5M1658 365.5h8M1689 365.5h7M1697 365.5h5M1619 367.5h6M1666 369.5h8M1603 403.5h6M1609 409.5h8M1618 409.5h2M1602 413.5h3M1607 415.5h6M1618 415.5h7M1626 415.5h7M1634 415.5h5M1640 415.5h8M1608 419.5h4M1613 419.5h3M1617 419.5h2M1600 421.5h6M1606 423.5h3M1610 423.5h3M1614 423.5h4M1608 425.5h7M1601 429.5h7M1602 441.5h4M1606 443.5h3M1602 445.5h3M1608 447.5h3M1612 447.5h8M1606 455.5h7M1603 459.5h10M1607 465.5h9M1601 467.5h6M1608 467.5h5M1602 469.5h9M1600 483.5h7M1608 485.5h7M1600 487.5h6M1607 487.5h5M1605 507.5h5M1611 507.5h4M1602 511.5h3M1606 513.5h9M1611 515.5h8M1620 515.5h2M1602 517.5h10M1611 525.5h3M1607 533.5h5M1610 537.5h5M1601 545.5h8M1601 547.5h4M1606 549.5h4M1609 557.5h3M1607 565.5h3M1602 567.5h4M1609 571.5h10M1603 573.5h5M1609 573.5h5M1611 575.5h3M1601 587.5h7M1609 587.5h3M1607 589.5h3M1604 595.5h7M1606 603.5h8M1602 605.5h3M1604 619.5h9M1614 619.5h5M1620 619.5h6M1627 619.5h1M1603 629.5h4M1608 629.5h7M1616 629.5h3M1609 637.5h8M1611 639.5h4M1605 643.5h7M1611 645.5h5M1604 647.5h7M1605 657.5h10M1604 661.5h8M1610 663.5h5M1605 665.5h9M1609 667.5h3M1606 671.5h6M1603 673.5h9M1608 677.5h8M1604 679.5h4M1608 681.5h7M1601 689.5h4M1600 691.5h8M1603 693.5h3M1607 693.5h6M1609 697.5h4M1608 699.5h7"/><path stroke="#d4d4d4" stroke-width="1" d="M1623 179.5h7M1631 179.5h7M1639 179.5h3M1620 197.5h6M1627 197.5h8M1636 197.5h8M1645 197.5h5M1621 199.5h4M1598 203.5h8M1607 203.5h3M1682 211.5h3M1686 211.5h7M1694 211.5h2M1609 217.5h3M1620 217.5h3M1629 217.5h2M1659 217.5h4M1664 217.5h6M1671 217.5h5M1677 217.5h7M1685 217.5h4M1610 219.5h3M1621 219.5h3M1609 221.5h3M1620 221.5h3M1662 221.5h7M1670 221.5h7M1678 221.5h2M1610 223.5h3M1621 223.5h3M1669 223.5h10M1609 225.5h3M1621 225.5h3M1668 225.5h4M1673 225.5h5M1679 225.5h3M1610 227.5h3M1620 227.5h3M1670 227.5h7M1678 227.5h4M1597 255.5h1M1604 255.5h1M1617 255.5h1M1596 261.5h1M1605 261.5h1M1607 261.5h1M1608 263.5h1M1599 265.5h1M1614 265.5h2M1606 267.5h2M1609 267.5h1M1598 271.5h1M1616 271.5h1M1623 271.5h1M1598 273.5h1M1612 273.5h1M1618 273.5h1M1606 275.5h1M1608 275.5h1M1613 275.5h1M1626 275.5h1M1645 275.5h2M1648 275.5h2M1655 275.5h1M1657 275.5h1M1664 275.5h1M1671 275.5h1M1601 279.5h1M1594 283.5h1M1592 285.5h2M1601 287.5h1M1613 289.5h2M1616 289.5h1M1600 291.5h1M1606 291.5h1M1611 291.5h1M1616 291.5h1M1626 291.5h1M1639 291.5h3M1594 295.5h2M1612 297.5h2M1615 297.5h1M1600 299.5h1M1618 299.5h1M1624 299.5h1M1594 303.5h2M1615 305.5h2M1618 305.5h1M1600 307.5h1M1618 307.5h1M1625 307.5h1M1594 309.5h2M1616 311.5h2M1619 311.5h1M1599 313.5h1M1604 313.5h1M1621 313.5h1M1623 313.5h1M1607 315.5h1M1613 315.5h1M1602 319.5h1M1616 319.5h1M1628 319.5h1M1637 319.5h2M1640 319.5h1M1604 321.5h1M1617 321.5h3M1598 323.5h2M1605 323.5h2M1610 325.5h1M1596 327.5h1M1600 329.5h1M1606 329.5h1M1611 329.5h1M1616 329.5h1M1626 329.5h1M1639 329.5h3M1594 331.5h2M1617 333.5h2M1620 333.5h1M1599 335.5h1M1604 335.5h1M1618 335.5h2M1625 335.5h1M1627 335.5h1M1610 337.5h1M1615 337.5h1M1628 337.5h2M1611 339.5h1M1617 339.5h1M1631 339.5h2M1596 341.5h1M1599 343.5h2M1607 343.5h3M1603 345.5h1M1617 345.5h3M1632 345.5h1M1643 345.5h4M1604 347.5h1M1619 347.5h3M1598 349.5h2M1603 349.5h2M1596 351.5h1M1594 353.5h2M1605 355.5h1M1616 355.5h4M1600 357.5h1M1607 357.5h1M1614 357.5h1M1620 357.5h1M1631 357.5h1M1646 357.5h3M1599 359.5h1M1607 359.5h1M1613 359.5h1M1600 365.5h1M1617 365.5h3M1626 365.5h1M1641 365.5h1M1654 365.5h3M1666 365.5h2M1685 365.5h3M1600 367.5h1M1616 367.5h3M1626 367.5h2M1701 367.5h1M1601 369.5h1M1617 369.5h3M1626 369.5h1M1639 369.5h1M1659 369.5h6M1675 369.5h5M1681 369.5h6M1688 369.5h6M1594 371.5h2M1592 373.5h2M1601 375.5h3M1604 377.5h1M1614 377.5h3M1603 379.5h1M1609 379.5h1M1623 379.5h1M1641 379.5h6M1594 381.5h2M1608 383.5h1M1619 383.5h3M1603 385.5h1M1609 385.5h1M1622 385.5h1M1643 385.5h8M1594 387.5h2M1605 389.5h1M1616 389.5h3M1603 391.5h1M1610 391.5h1M1624 391.5h1M1643 391.5h8M1594 393.5h1M1592 395.5h1M1590 397.5h2M1600 405.5h1M1606 407.5h1M1618 407.5h1M1607 409.5h1M1620 409.5h1M1607 411.5h1M1614 411.5h1M1600 413.5h1M1606 413.5h1M1603 415.5h1M1649 415.5h6M1666 415.5h4M1677 415.5h2M1605 417.5h1M1620 417.5h1M1607 419.5h1M1620 419.5h1M1598 421.5h1M1606 421.5h1M1604 423.5h1M1619 423.5h1M1606 425.5h1M1616 425.5h1M1599 427.5h1M1600 429.5h1M1609 429.5h1M1608 431.5h1M1615 431.5h1M1605 433.5h1M1619 433.5h1M1592 435.5h1M1601 439.5h1M1601 441.5h1M1607 441.5h1M1604 443.5h1M1610 443.5h1M1600 445.5h1M1606 445.5h1M1606 447.5h1M1621 447.5h1M1592 449.5h1M1599 453.5h1M1604 455.5h1M1614 455.5h1M1606 457.5h1M1613 457.5h1M1601 459.5h1M1614 459.5h1M1602 461.5h1M1611 461.5h1M1602 463.5h1M1610 463.5h1M1606 465.5h1M1617 465.5h1M1600 467.5h1M1613 467.5h1M1600 469.5h1M1611 469.5h1M1592 471.5h1M1590 473.5h1M1604 475.5h6M1618 475.5h2M1611 479.5h1M1606 481.5h1M1612 481.5h1M1599 483.5h1M1607 483.5h1M1607 485.5h1M1616 485.5h1M1598 487.5h1M1613 487.5h1M1590 489.5h1M1601 493.5h1M1599 495.5h1M1609 495.5h1M1602 497.5h1M1615 497.5h1M1602 499.5h1M1610 499.5h1M1604 501.5h1M1618 501.5h1M1592 503.5h1M1602 505.5h1M1603 507.5h1M1617 507.5h1M1605 509.5h1M1620 509.5h1M1600 511.5h1M1605 511.5h1M1604 513.5h1M1616 513.5h1M1609 515.5h1M1623 515.5h1M1601 517.5h1M1613 517.5h1M1608 519.5h1M1617 519.5h1M1601 521.5h1M1605 523.5h1M1611 523.5h1M1609 525.5h1M1615 525.5h1M1594 527.5h1M1592 529.5h1M1598 531.5h1M1605 533.5h1M1613 533.5h1M1601 535.5h1M1611 535.5h1M1608 537.5h1M1616 537.5h1M1592 539.5h1M1599 543.5h1M1600 545.5h1M1610 545.5h1M1600 547.5h1M1606 547.5h1M1604 549.5h1M1611 549.5h1M1592 551.5h1M1601 555.5h1M1608 557.5h1M1612 557.5h1M1602 559.5h1M1613 559.5h1M1606 561.5h1M1617 561.5h1M1600 563.5h1M1615 563.5h1M1606 565.5h1M1611 565.5h1M1601 567.5h1M1606 567.5h1M1606 569.5h1M1618 569.5h1M1608 571.5h1M1619 571.5h1M1601 573.5h1M1615 573.5h1M1609 575.5h1M1615 575.5h1M1592 577.5h1M1590 579.5h1M1607 583.5h10M1627 583.5h7M1635 583.5h3M1647 583.5h2M1600 585.5h1M1600 587.5h1M1614 587.5h1M1606 589.5h1M1611 589.5h1M1602 591.5h1M1611 591.5h1M1604 593.5h1M1617 593.5h1M1602 595.5h1M1611 595.5h1M1605 597.5h1M1613 597.5h1M1592 599.5h1M1604 603.5h1M1615 603.5h1M1600 605.5h1M1605 605.5h1M1601 607.5h1M1608 607.5h1M1590 609.5h1M1599 615.5h1M1602 619.5h1M1592 623.5h1M1590 627.5h1M1601 629.5h1M1600 633.5h1M1603 635.5h1M1615 635.5h1M1608 637.5h1M1617 637.5h1M1609 639.5h1M1616 639.5h1M1603 641.5h1M1609 641.5h1M1604 643.5h1M1613 643.5h1M1609 645.5h1M1617 645.5h1M1603 647.5h1M1612 647.5h1M1602 649.5h1M1609 649.5h1M1592 651.5h1M1603 653.5h1M1608 655.5h1M1619 655.5h1M1603 657.5h1M1616 657.5h1M1600 659.5h1M1612 659.5h1M1602 661.5h1M1613 661.5h1M1608 663.5h1M1616 663.5h1M1603 665.5h1M1614 665.5h1M1607 667.5h1M1613 667.5h1M1609 669.5h1M1623 669.5h1M1604 671.5h1M1612 671.5h1M1601 673.5h1M1612 673.5h1M1603 675.5h1M1606 677.5h1M1617 677.5h1M1602 679.5h1M1608 679.5h1M1607 681.5h1M1615 681.5h1M1594 683.5h1M1592 685.5h1M1602 687.5h1M1600 689.5h1M1606 689.5h1M1599 691.5h1M1608 691.5h1M1602 693.5h1M1615 693.5h1M1608 695.5h1M1621 695.5h1M1607 697.5h1M1613 697.5h1M1606 699.5h1M1615 699.5h1M1608 701.5h1M1621 701.5h1M1592 703.5h1M1590 707.5h1"/><path stroke="#c586c0" stroke-width="1" d="M1590 255.5h6M1606 255.5h4M1594 279.5h6M1596 313.5h2M1598 325.5h6M1596 335.5h2M1596 343.5h2M1596 379.5h6M1596 385.5h6M1596 391.5h6"/><path stroke="#6a9955" stroke-width="1" d="M1590 257.5h8M1599 257.5h1M1601 257.5h10M1612 257.5h1M1614 257.5h4M1619 257.5h16M1596 293.5h22M1619 293.5h8M1596 301.5h22M1619 301.5h8M1596 363.5h9M1606 363.5h8M1615 363.5h7M1623 363.5h9M1660 367.5h4M1665 367.5h9M1675 367.5h5M1681 367.5h4M1686 367.5h4M1691 367.5h9M1696 369.5h4M1701 369.5h1"/><path stroke="#4ec9b0" stroke-width="1" d="M1590 261.5h6M1597 261.5h7"/><path stroke="#dcdcaa" stroke-width="1" d="M1592 267.5h4M1627 275.5h18M1594 289.5h9M1612 291.5h4M1621 291.5h5M1594 297.5h8M1594 305.5h11M1594 311.5h12M1618 319.5h10M1605 321.5h12M1612 329.5h4M1621 329.5h5M1594 333.5h13M1598 337.5h12M1598 339.5h6M1605 339.5h3M1609 339.5h1M1621 345.5h10M1606 347.5h3M1610 347.5h4M1615 347.5h3M1594 355.5h7M1602 355.5h3M1615 357.5h4M1626 357.5h5M1643 365.5h10M1641 369.5h5M1647 369.5h6M1654 369.5h5M1594 377.5h9M1625 379.5h8M1634 379.5h7M1594 383.5h5M1600 383.5h7M1624 385.5h5M1630 385.5h8M1639 385.5h3M1594 389.5h5M1600 389.5h5M1626 391.5h8M1635 391.5h6"/><path stroke="#b5cea8" stroke-width="1" d="M1601 323.5h4M1600 349.5h3M1608 407.5h10M1609 411.5h4M1604 415.5h3M1613 415.5h4M1656 415.5h10M1670 415.5h6M1607 417.5h9M1617 417.5h2M1610 431.5h4M1607 433.5h9M1617 433.5h1M1608 457.5h4M1604 461.5h6M1604 463.5h5M1611 475.5h6M1608 481.5h4M1600 495.5h8M1604 497.5h10M1604 499.5h5M1605 501.5h6M1612 501.5h5M1607 509.5h9M1617 509.5h2M1610 519.5h7M1606 523.5h4M1603 535.5h8M1604 559.5h8M1607 561.5h9M1602 563.5h8M1611 563.5h3M1608 569.5h9M1618 583.5h8M1640 583.5h6M1604 591.5h6M1606 593.5h10M1606 597.5h6M1603 607.5h4M1605 635.5h9M1605 641.5h3M1604 649.5h4M1610 655.5h8M1601 659.5h4M1606 659.5h6M1611 669.5h4M1616 669.5h6M1610 695.5h10M1609 701.5h8M1618 701.5h2"/><path stroke="#d7ba7d" stroke-width="1" d="M1590 405.5h10M1592 427.5h6M1592 439.5h8M1592 453.5h6M1590 475.5h8M1599 475.5h5M1590 479.5h3M1594 479.5h3M1598 479.5h4M1603 479.5h7M1592 493.5h8M1592 505.5h10M1594 521.5h6M1592 531.5h6M1592 543.5h7M1592 555.5h8M1590 583.5h9M1600 583.5h6M1592 585.5h8M1594 615.5h4M1592 633.5h8M1592 653.5h10M1594 675.5h8M1592 687.5h9"/><path stroke="#b48ad2" stroke-width="1" d="M1592 407.5h5M1598 407.5h7M1592 409.5h4M1597 409.5h8M1592 411.5h7M1600 411.5h6M1592 413.5h7M1592 415.5h10M1592 417.5h4M1597 417.5h7M1592 421.5h5M1592 423.5h4M1597 423.5h6M1594 429.5h6M1594 431.5h5M1600 431.5h7M1594 441.5h6M1594 443.5h9M1594 447.5h6M1601 447.5h4M1594 457.5h3M1598 457.5h4M1603 457.5h2M1594 459.5h6M1594 463.5h8M1594 465.5h5M1600 465.5h5M1594 469.5h5M1592 483.5h7M1592 485.5h5M1598 485.5h8M1592 487.5h6M1594 507.5h8M1594 509.5h3M1598 509.5h7M1594 511.5h5M1594 513.5h9M1594 515.5h4M1599 515.5h4M1604 515.5h4M1594 517.5h6M1594 519.5h6M1601 519.5h7M1596 523.5h8M1596 525.5h3M1600 525.5h4M1605 525.5h3M1594 533.5h10M1594 535.5h7M1594 545.5h5M1594 549.5h9M1594 557.5h8M1603 557.5h4M1594 561.5h6M1601 561.5h5M1594 565.5h8M1603 565.5h2M1594 575.5h4M1599 575.5h5M1605 575.5h3M1594 587.5h6M1594 591.5h7M1594 593.5h10M1594 595.5h8M1594 597.5h4M1599 597.5h6M1592 605.5h7M1594 635.5h9M1594 637.5h7M1602 637.5h3M1606 637.5h1M1594 647.5h8M1594 649.5h7M1594 655.5h3M1598 655.5h5M1604 655.5h3M1594 659.5h5M1594 663.5h4M1599 663.5h5M1605 663.5h2M1594 665.5h8M1594 667.5h4M1599 667.5h3M1603 667.5h3M1594 669.5h7M1602 669.5h3M1606 669.5h2M1594 673.5h6M1596 679.5h5M1596 681.5h10M1594 689.5h5M1594 691.5h5"/></g><g opacity="0.34"><path stroke="#808080" stroke-width="1" d="M1590 167.5h1M1601 167.5h1M1592 169.5h1M1594 171.5h1M1613 171.5h1M1594 173.5h1M1596 175.5h1M1614 175.5h1M1596 177.5h1M1598 179.5h1M1621 179.5h1M1643 179.5h2M1649 179.5h1M1600 181.5h1M1602 183.5h2M1608 183.5h1M1600 185.5h2M1605 185.5h1M1598 187.5h2M1604 187.5h1M1596 189.5h2M1606 189.5h1M1596 191.5h2M1603 191.5h1M1594 193.5h2M1600 193.5h1M1594 195.5h1M1612 195.5h1M1596 197.5h1M1660 197.5h1M1596 199.5h1M1626 199.5h2M1594 201.5h2M1601 201.5h1M1594 203.5h1M1611 203.5h1M1594 205.5h2M1601 205.5h1M1592 207.5h2M1599 207.5h1M1594 209.5h1M1636 209.5h1M1596 211.5h1M1598 213.5h1M1598 215.5h1M1603 215.5h1M1600 217.5h1M1600 219.5h1M1600 221.5h1M1600 223.5h1M1600 225.5h1M1600 227.5h1M1598 229.5h2M1605 229.5h1M1596 231.5h2M1603 231.5h1M1596 233.5h1M1594 235.5h2M1599 235.5h1M1594 237.5h2M1604 237.5h1M1592 239.5h2M1599 239.5h1M1590 243.5h2M1596 243.5h1M1590 247.5h2M1600 247.5h1M1590 251.5h1M1597 251.5h1M1590 399.5h2M1600 399.5h1M1590 403.5h1M1616 403.5h1M1590 713.5h2M1598 713.5h1"/><path stroke="#569cd6" stroke-width="1" d="M1592 167.5h8M1594 169.5h3M1595 171.5h3M1595 173.5h6M1597 175.5h3M1598 177.5h3M1600 179.5h3M1646 179.5h3M1602 181.5h3M1605 183.5h3M1602 185.5h3M1600 187.5h3M1599 189.5h6M1599 191.5h3M1597 193.5h3M1595 195.5h3M1598 197.5h2M1598 199.5h4M1597 201.5h3M1596 203.5h1M1597 205.5h3M1595 207.5h3M1596 209.5h3M1598 211.5h6M1600 213.5h4M1600 215.5h3M1602 217.5h4M1602 219.5h4M1602 221.5h4M1602 223.5h4M1602 225.5h4M1602 227.5h4M1601 229.5h3M1599 231.5h3M1598 233.5h6M1596 235.5h3M1597 237.5h6M1595 239.5h3M1592 243.5h3M1592 247.5h8M1591 251.5h6M1598 267.5h8M1594 271.5h4M1618 271.5h5M1594 273.5h4M1614 273.5h4M1594 275.5h3M1609 275.5h4M1651 275.5h4M1659 275.5h4M1666 275.5h5M1605 289.5h8M1596 291.5h4M1617 291.5h3M1604 297.5h8M1596 299.5h4M1620 299.5h4M1607 305.5h8M1596 307.5h4M1620 307.5h5M1608 311.5h8M1600 313.5h4M1598 315.5h3M1609 315.5h4M1598 319.5h4M1629 319.5h8M1605 325.5h5M1596 329.5h4M1617 329.5h3M1609 333.5h8M1600 335.5h4M1621 335.5h4M1611 337.5h4M1613 339.5h4M1598 345.5h4M1634 345.5h8M1607 355.5h8M1596 357.5h4M1622 357.5h3M1596 359.5h3M1609 359.5h4M1596 365.5h4M1621 365.5h4M1596 367.5h4M1596 369.5h4M1621 369.5h4M1606 377.5h8M1604 379.5h4M1610 383.5h8M1605 385.5h4M1607 389.5h8M1605 391.5h4M1593 399.5h6M1592 403.5h5M1593 713.5h5"/><path stroke="#9cdcfe" stroke-width="1" d="M1598 169.5h5M1617 169.5h7M1666 169.5h8M1599 171.5h5M1602 173.5h3M1611 173.5h7M1601 175.5h5M1601 177.5h4M1617 177.5h3M1621 177.5h4M1626 177.5h2M1643 177.5h10M1694 177.5h7M1604 179.5h5M1606 181.5h5M1619 181.5h6M1661 181.5h8M1598 195.5h5M1601 197.5h5M1603 199.5h6M1600 209.5h5M1617 209.5h4M1604 211.5h7M1612 211.5h3M1626 211.5h4M1631 211.5h8M1640 211.5h9M1650 211.5h5M1605 213.5h6M1613 217.5h4M1623 217.5h2M1632 217.5h6M1614 219.5h4M1625 219.5h6M1662 219.5h8M1671 219.5h3M1613 221.5h4M1624 221.5h8M1613 223.5h4M1625 223.5h4M1613 225.5h4M1625 225.5h6M1613 227.5h4M1624 227.5h3M1605 233.5h3M1609 233.5h5M1615 233.5h2M1631 233.5h6M1599 255.5h4M1592 263.5h4M1596 263.5h1M1592 265.5h5M1597 265.5h1M1596 267.5h1M1599 271.5h16M1599 273.5h12M1598 275.5h7M1614 275.5h12M1596 281.5h9M1605 281.5h1M1607 281.5h7M1592 287.5h7M1599 287.5h1M1603 289.5h1M1601 291.5h5M1607 291.5h4M1602 297.5h1M1601 299.5h16M1605 305.5h1M1601 307.5h16M1606 311.5h1M1605 313.5h16M1602 315.5h4M1603 319.5h12M1600 321.5h4M1601 329.5h5M1607 329.5h4M1607 333.5h1M1605 335.5h12M1616 337.5h12M1619 339.5h3M1623 339.5h5M1629 339.5h2M1602 343.5h4M1604 345.5h7M1612 345.5h4M1600 347.5h4M1601 357.5h5M1609 357.5h4M1601 359.5h6M1615 359.5h7M1623 359.5h4M1602 365.5h9M1612 365.5h4M1628 365.5h6M1635 365.5h5M1669 365.5h8M1678 365.5h6M1602 367.5h6M1609 367.5h7M1629 367.5h4M1634 367.5h8M1643 367.5h8M1652 367.5h7M1602 369.5h4M1607 369.5h9M1627 369.5h3M1631 369.5h3M1635 369.5h4M1592 375.5h8M1610 379.5h9M1620 379.5h2M1610 385.5h8M1619 385.5h3M1612 391.5h8M1621 391.5h3M1598 403.5h4M1610 403.5h6M1592 419.5h8M1601 419.5h5M1592 425.5h6M1599 425.5h6M1594 433.5h10M1594 445.5h5M1594 455.5h9M1594 461.5h7M1594 467.5h5M1592 481.5h8M1601 481.5h5M1594 495.5h5M1594 497.5h7M1594 499.5h7M1594 501.5h9M1594 537.5h7M1602 537.5h3M1606 537.5h1M1594 547.5h5M1594 559.5h7M1594 563.5h5M1594 567.5h6M1594 569.5h3M1598 569.5h6M1594 571.5h9M1604 571.5h4M1594 573.5h6M1594 589.5h5M1600 589.5h6M1592 603.5h5M1598 603.5h3M1602 603.5h1M1592 607.5h9M1594 619.5h8M1592 629.5h8M1594 639.5h6M1601 639.5h7M1594 641.5h9M1594 643.5h9M1594 645.5h4M1599 645.5h3M1603 645.5h5M1594 657.5h8M1594 661.5h7M1594 671.5h10M1596 677.5h9M1594 693.5h7M1594 695.5h4M1599 695.5h7M1594 697.5h5M1600 697.5h6M1594 699.5h9M1604 699.5h2M1594 701.5h3M1598 701.5h7M1606 701.5h1"/><path stroke="#ce9178" stroke-width="1" d="M1604 169.5h3M1608 169.5h8M1625 169.5h4M1630 169.5h8M1639 169.5h6M1646 169.5h7M1654 169.5h9M1664 169.5h1M1675 169.5h4M1680 169.5h4M1685 169.5h6M1605 171.5h8M1605 173.5h6M1619 173.5h7M1606 175.5h7M1606 177.5h10M1629 177.5h8M1638 177.5h5M1653 177.5h6M1660 177.5h7M1668 177.5h9M1678 177.5h6M1685 177.5h7M1610 179.5h10M1611 181.5h8M1626 181.5h9M1636 181.5h3M1640 181.5h6M1647 181.5h4M1652 181.5h3M1656 181.5h4M1670 181.5h3M1674 181.5h3M1678 181.5h4M1604 195.5h7M1607 197.5h7M1615 197.5h4M1651 197.5h8M1610 199.5h10M1606 209.5h10M1621 209.5h9M1631 209.5h4M1615 211.5h10M1657 211.5h4M1662 211.5h8M1671 211.5h6M1678 211.5h3M1611 213.5h8M1607 217.5h2M1617 217.5h2M1626 217.5h3M1638 217.5h3M1642 217.5h9M1652 217.5h6M1689 217.5h6M1696 217.5h5M1607 219.5h2M1618 219.5h2M1632 219.5h8M1641 219.5h4M1646 219.5h3M1650 219.5h8M1659 219.5h3M1675 219.5h5M1681 219.5h7M1689 219.5h5M1695 219.5h4M1700 219.5h2M1606 221.5h2M1617 221.5h2M1633 221.5h3M1637 221.5h4M1642 221.5h7M1650 221.5h5M1656 221.5h4M1681 221.5h7M1689 221.5h3M1693 221.5h5M1699 221.5h3M1607 223.5h2M1618 223.5h2M1629 223.5h4M1634 223.5h9M1644 223.5h3M1648 223.5h6M1655 223.5h8M1664 223.5h5M1680 223.5h5M1686 223.5h4M1691 223.5h5M1697 223.5h5M1606 225.5h2M1618 225.5h2M1631 225.5h9M1641 225.5h8M1650 225.5h3M1654 225.5h7M1662 225.5h5M1683 225.5h8M1692 225.5h6M1699 225.5h3M1607 227.5h2M1617 227.5h2M1628 227.5h8M1637 227.5h9M1647 227.5h7M1655 227.5h6M1662 227.5h8M1683 227.5h8M1692 227.5h6M1699 227.5h3M1617 233.5h7M1625 233.5h6M1638 233.5h10M1611 255.5h6M1598 263.5h10M1600 265.5h14M1627 291.5h12M1627 329.5h12M1633 357.5h6M1640 357.5h5M1658 365.5h8M1689 365.5h7M1697 365.5h5M1619 367.5h6M1666 369.5h8M1603 403.5h6M1609 409.5h8M1618 409.5h2M1602 413.5h3M1607 415.5h6M1618 415.5h7M1626 415.5h7M1634 415.5h5M1640 415.5h8M1608 419.5h4M1613 419.5h3M1617 419.5h2M1600 421.5h6M1606 423.5h3M1610 423.5h3M1614 423.5h4M1608 425.5h7M1601 429.5h7M1602 441.5h4M1606 443.5h3M1602 445.5h3M1608 447.5h3M1612 447.5h8M1606 455.5h7M1603 459.5h10M1607 465.5h9M1601 467.5h6M1608 467.5h5M1602 469.5h9M1600 483.5h7M1608 485.5h7M1600 487.5h6M1607 487.5h5M1605 507.5h5M1611 507.5h4M1602 511.5h3M1606 513.5h9M1611 515.5h8M1620 515.5h2M1602 517.5h10M1611 525.5h3M1607 533.5h5M1610 537.5h5M1601 545.5h8M1601 547.5h4M1606 549.5h4M1609 557.5h3M1607 565.5h3M1602 567.5h4M1609 571.5h10M1603 573.5h5M1609 573.5h5M1611 575.5h3M1601 587.5h7M1609 587.5h3M1607 589.5h3M1604 595.5h7M1606 603.5h8M1602 605.5h3M1604 619.5h9M1614 619.5h5M1620 619.5h6M1627 619.5h1M1603 629.5h4M1608 629.5h7M1616 629.5h3M1609 637.5h8M1611 639.5h4M1605 643.5h7M1611 645.5h5M1604 647.5h7M1605 657.5h10M1604 661.5h8M1610 663.5h5M1605 665.5h9M1609 667.5h3M1606 671.5h6M1603 673.5h9M1608 677.5h8M1604 679.5h4M1608 681.5h7M1601 689.5h4M1600 691.5h8M1603 693.5h3M1607 693.5h6M1609 697.5h4M1608 699.5h7"/><path stroke="#d4d4d4" stroke-width="1" d="M1623 179.5h7M1631 179.5h7M1639 179.5h3M1620 197.5h6M1627 197.5h8M1636 197.5h8M1645 197.5h5M1621 199.5h4M1598 203.5h8M1607 203.5h3M1682 211.5h3M1686 211.5h7M1694 211.5h2M1609 217.5h3M1620 217.5h3M1629 217.5h2M1659 217.5h4M1664 217.5h6M1671 217.5h5M1677 217.5h7M1685 217.5h4M1610 219.5h3M1621 219.5h3M1609 221.5h3M1620 221.5h3M1662 221.5h7M1670 221.5h7M1678 221.5h2M1610 223.5h3M1621 223.5h3M1669 223.5h10M1609 225.5h3M1621 225.5h3M1668 225.5h4M1673 225.5h5M1679 225.5h3M1610 227.5h3M1620 227.5h3M1670 227.5h7M1678 227.5h4M1597 255.5h1M1604 255.5h1M1617 255.5h1M1596 261.5h1M1605 261.5h1M1607 261.5h1M1608 263.5h1M1599 265.5h1M1614 265.5h2M1606 267.5h2M1609 267.5h1M1598 271.5h1M1616 271.5h1M1623 271.5h1M1598 273.5h1M1612 273.5h1M1618 273.5h1M1606 275.5h1M1608 275.5h1M1613 275.5h1M1626 275.5h1M1645 275.5h2M1648 275.5h2M1655 275.5h1M1657 275.5h1M1664 275.5h1M1671 275.5h1M1601 279.5h1M1594 283.5h1M1592 285.5h2M1601 287.5h1M1613 289.5h2M1616 289.5h1M1600 291.5h1M1606 291.5h1M1611 291.5h1M1616 291.5h1M1626 291.5h1M1639 291.5h3M1594 295.5h2M1612 297.5h2M1615 297.5h1M1600 299.5h1M1618 299.5h1M1624 299.5h1M1594 303.5h2M1615 305.5h2M1618 305.5h1M1600 307.5h1M1618 307.5h1M1625 307.5h1M1594 309.5h2M1616 311.5h2M1619 311.5h1M1599 313.5h1M1604 313.5h1M1621 313.5h1M1623 313.5h1M1607 315.5h1M1613 315.5h1M1602 319.5h1M1616 319.5h1M1628 319.5h1M1637 319.5h2M1640 319.5h1M1604 321.5h1M1617 321.5h3M1598 323.5h2M1605 323.5h2M1610 325.5h1M1596 327.5h1M1600 329.5h1M1606 329.5h1M1611 329.5h1M1616 329.5h1M1626 329.5h1M1639 329.5h3M1594 331.5h2M1617 333.5h2M1620 333.5h1M1599 335.5h1M1604 335.5h1M1618 335.5h2M1625 335.5h1M1627 335.5h1M1610 337.5h1M1615 337.5h1M1628 337.5h2M1611 339.5h1M1617 339.5h1M1631 339.5h2M1596 341.5h1M1599 343.5h2M1607 343.5h3M1603 345.5h1M1617 345.5h3M1632 345.5h1M1643 345.5h4M1604 347.5h1M1619 347.5h3M1598 349.5h2M1603 349.5h2M1596 351.5h1M1594 353.5h2M1605 355.5h1M1616 355.5h4M1600 357.5h1M1607 357.5h1M1614 357.5h1M1620 357.5h1M1631 357.5h1M1646 357.5h3M1599 359.5h1M1607 359.5h1M1613 359.5h1M1600 365.5h1M1617 365.5h3M1626 365.5h1M1641 365.5h1M1654 365.5h3M1666 365.5h2M1685 365.5h3M1600 367.5h1M1616 367.5h3M1626 367.5h2M1701 367.5h1M1601 369.5h1M1617 369.5h3M1626 369.5h1M1639 369.5h1M1659 369.5h6M1675 369.5h5M1681 369.5h6M1688 369.5h6M1594 371.5h2M1592 373.5h2M1601 375.5h3M1604 377.5h1M1614 377.5h3M1603 379.5h1M1609 379.5h1M1623 379.5h1M1641 379.5h6M1594 381.5h2M1608 383.5h1M1619 383.5h3M1603 385.5h1M1609 385.5h1M1622 385.5h1M1643 385.5h8M1594 387.5h2M1605 389.5h1M1616 389.5h3M1603 391.5h1M1610 391.5h1M1624 391.5h1M1643 391.5h8M1594 393.5h1M1592 395.5h1M1590 397.5h2M1600 405.5h1M1606 407.5h1M1618 407.5h1M1607 409.5h1M1620 409.5h1M1607 411.5h1M1614 411.5h1M1600 413.5h1M1606 413.5h1M1603 415.5h1M1649 415.5h6M1666 415.5h4M1677 415.5h2M1605 417.5h1M1620 417.5h1M1607 419.5h1M1620 419.5h1M1598 421.5h1M1606 421.5h1M1604 423.5h1M1619 423.5h1M1606 425.5h1M1616 425.5h1M1599 427.5h1M1600 429.5h1M1609 429.5h1M1608 431.5h1M1615 431.5h1M1605 433.5h1M1619 433.5h1M1592 435.5h1M1601 439.5h1M1601 441.5h1M1607 441.5h1M1604 443.5h1M1610 443.5h1M1600 445.5h1M1606 445.5h1M1606 447.5h1M1621 447.5h1M1592 449.5h1M1599 453.5h1M1604 455.5h1M1614 455.5h1M1606 457.5h1M1613 457.5h1M1601 459.5h1M1614 459.5h1M1602 461.5h1M1611 461.5h1M1602 463.5h1M1610 463.5h1M1606 465.5h1M1617 465.5h1M1600 467.5h1M1613 467.5h1M1600 469.5h1M1611 469.5h1M1592 471.5h1M1590 473.5h1M1604 475.5h6M1618 475.5h2M1611 479.5h1M1606 481.5h1M1612 481.5h1M1599 483.5h1M1607 483.5h1M1607 485.5h1M1616 485.5h1M1598 487.5h1M1613 487.5h1M1590 489.5h1M1601 493.5h1M1599 495.5h1M1609 495.5h1M1602 497.5h1M1615 497.5h1M1602 499.5h1M1610 499.5h1M1604 501.5h1M1618 501.5h1M1592 503.5h1M1602 505.5h1M1603 507.5h1M1617 507.5h1M1605 509.5h1M1620 509.5h1M1600 511.5h1M1605 511.5h1M1604 513.5h1M1616 513.5h1M1609 515.5h1M1623 515.5h1M1601 517.5h1M1613 517.5h1M1608 519.5h1M1617 519.5h1M1601 521.5h1M1605 523.5h1M1611 523.5h1M1609 525.5h1M1615 525.5h1M1594 527.5h1M1592 529.5h1M1598 531.5h1M1605 533.5h1M1613 533.5h1M1601 535.5h1M1611 535.5h1M1608 537.5h1M1616 537.5h1M1592 539.5h1M1599 543.5h1M1600 545.5h1M1610 545.5h1M1600 547.5h1M1606 547.5h1M1604 549.5h1M1611 549.5h1M1592 551.5h1M1601 555.5h1M1608 557.5h1M1612 557.5h1M1602 559.5h1M1613 559.5h1M1606 561.5h1M1617 561.5h1M1600 563.5h1M1615 563.5h1M1606 565.5h1M1611 565.5h1M1601 567.5h1M1606 567.5h1M1606 569.5h1M1618 569.5h1M1608 571.5h1M1619 571.5h1M1601 573.5h1M1615 573.5h1M1609 575.5h1M1615 575.5h1M1592 577.5h1M1590 579.5h1M1607 583.5h10M1627 583.5h7M1635 583.5h3M1647 583.5h2M1600 585.5h1M1600 587.5h1M1614 587.5h1M1606 589.5h1M1611 589.5h1M1602 591.5h1M1611 591.5h1M1604 593.5h1M1617 593.5h1M1602 595.5h1M1611 595.5h1M1605 597.5h1M1613 597.5h1M1592 599.5h1M1604 603.5h1M1615 603.5h1M1600 605.5h1M1605 605.5h1M1601 607.5h1M1608 607.5h1M1590 609.5h1M1599 615.5h1M1602 619.5h1M1592 623.5h1M1590 627.5h1M1601 629.5h1M1600 633.5h1M1603 635.5h1M1615 635.5h1M1608 637.5h1M1617 637.5h1M1609 639.5h1M1616 639.5h1M1603 641.5h1M1609 641.5h1M1604 643.5h1M1613 643.5h1M1609 645.5h1M1617 645.5h1M1603 647.5h1M1612 647.5h1M1602 649.5h1M1609 649.5h1M1592 651.5h1M1603 653.5h1M1608 655.5h1M1619 655.5h1M1603 657.5h1M1616 657.5h1M1600 659.5h1M1612 659.5h1M1602 661.5h1M1613 661.5h1M1608 663.5h1M1616 663.5h1M1603 665.5h1M1614 665.5h1M1607 667.5h1M1613 667.5h1M1609 669.5h1M1623 669.5h1M1604 671.5h1M1612 671.5h1M1601 673.5h1M1612 673.5h1M1603 675.5h1M1606 677.5h1M1617 677.5h1M1602 679.5h1M1608 679.5h1M1607 681.5h1M1615 681.5h1M1594 683.5h1M1592 685.5h1M1602 687.5h1M1600 689.5h1M1606 689.5h1M1599 691.5h1M1608 691.5h1M1602 693.5h1M1615 693.5h1M1608 695.5h1M1621 695.5h1M1607 697.5h1M1613 697.5h1M1606 699.5h1M1615 699.5h1M1608 701.5h1M1621 701.5h1M1592 703.5h1M1590 707.5h1"/><path stroke="#c586c0" stroke-width="1" d="M1590 255.5h6M1606 255.5h4M1594 279.5h6M1596 313.5h2M1598 325.5h6M1596 335.5h2M1596 343.5h2M1596 379.5h6M1596 385.5h6M1596 391.5h6"/><path stroke="#6a9955" stroke-width="1" d="M1590 257.5h8M1599 257.5h1M1601 257.5h10M1612 257.5h1M1614 257.5h4M1619 257.5h16M1596 293.5h22M1619 293.5h8M1596 301.5h22M1619 301.5h8M1596 363.5h9M1606 363.5h8M1615 363.5h7M1623 363.5h9M1660 367.5h4M1665 367.5h9M1675 367.5h5M1681 367.5h4M1686 367.5h4M1691 367.5h9M1696 369.5h4M1701 369.5h1"/><path stroke="#4ec9b0" stroke-width="1" d="M1590 261.5h6M1597 261.5h7"/><path stroke="#dcdcaa" stroke-width="1" d="M1592 267.5h4M1627 275.5h18M1594 289.5h9M1612 291.5h4M1621 291.5h5M1594 297.5h8M1594 305.5h11M1594 311.5h12M1618 319.5h10M1605 321.5h12M1612 329.5h4M1621 329.5h5M1594 333.5h13M1598 337.5h12M1598 339.5h6M1605 339.5h3M1609 339.5h1M1621 345.5h10M1606 347.5h3M1610 347.5h4M1615 347.5h3M1594 355.5h7M1602 355.5h3M1615 357.5h4M1626 357.5h5M1643 365.5h10M1641 369.5h5M1647 369.5h6M1654 369.5h5M1594 377.5h9M1625 379.5h8M1634 379.5h7M1594 383.5h5M1600 383.5h7M1624 385.5h5M1630 385.5h8M1639 385.5h3M1594 389.5h5M1600 389.5h5M1626 391.5h8M1635 391.5h6"/><path stroke="#b5cea8" stroke-width="1" d="M1601 323.5h4M1600 349.5h3M1608 407.5h10M1609 411.5h4M1604 415.5h3M1613 415.5h4M1656 415.5h10M1670 415.5h6M1607 417.5h9M1617 417.5h2M1610 431.5h4M1607 433.5h9M1617 433.5h1M1608 457.5h4M1604 461.5h6M1604 463.5h5M1611 475.5h6M1608 481.5h4M1600 495.5h8M1604 497.5h10M1604 499.5h5M1605 501.5h6M1612 501.5h5M1607 509.5h9M1617 509.5h2M1610 519.5h7M1606 523.5h4M1603 535.5h8M1604 559.5h8M1607 561.5h9M1602 563.5h8M1611 563.5h3M1608 569.5h9M1618 583.5h8M1640 583.5h6M1604 591.5h6M1606 593.5h10M1606 597.5h6M1603 607.5h4M1605 635.5h9M1605 641.5h3M1604 649.5h4M1610 655.5h8M1601 659.5h4M1606 659.5h6M1611 669.5h4M1616 669.5h6M1610 695.5h10M1609 701.5h8M1618 701.5h2"/><path stroke="#d7ba7d" stroke-width="1" d="M1590 405.5h10M1592 427.5h6M1592 439.5h8M1592 453.5h6M1590 475.5h8M1599 475.5h5M1590 479.5h3M1594 479.5h3M1598 479.5h4M1603 479.5h7M1592 493.5h8M1592 505.5h10M1594 521.5h6M1592 531.5h6M1592 543.5h7M1592 555.5h8M1590 583.5h9M1600 583.5h6M1592 585.5h8M1594 615.5h4M1592 633.5h8M1592 653.5h10M1594 675.5h8M1592 687.5h9"/><path stroke="#b48ad2" stroke-width="1" d="M1592 407.5h5M1598 407.5h7M1592 409.5h4M1597 409.5h8M1592 411.5h7M1600 411.5h6M1592 413.5h7M1592 415.5h10M1592 417.5h4M1597 417.5h7M1592 421.5h5M1592 423.5h4M1597 423.5h6M1594 429.5h6M1594 431.5h5M1600 431.5h7M1594 441.5h6M1594 443.5h9M1594 447.5h6M1601 447.5h4M1594 457.5h3M1598 457.5h4M1603 457.5h2M1594 459.5h6M1594 463.5h8M1594 465.5h5M1600 465.5h5M1594 469.5h5M1592 483.5h7M1592 485.5h5M1598 485.5h8M1592 487.5h6M1594 507.5h8M1594 509.5h3M1598 509.5h7M1594 511.5h5M1594 513.5h9M1594 515.5h4M1599 515.5h4M1604 515.5h4M1594 517.5h6M1594 519.5h6M1601 519.5h7M1596 523.5h8M1596 525.5h3M1600 525.5h4M1605 525.5h3M1594 533.5h10M1594 535.5h7M1594 545.5h5M1594 549.5h9M1594 557.5h8M1603 557.5h4M1594 561.5h6M1601 561.5h5M1594 565.5h8M1603 565.5h2M1594 575.5h4M1599 575.5h5M1605 575.5h3M1594 587.5h6M1594 591.5h7M1594 593.5h10M1594 595.5h8M1594 597.5h4M1599 597.5h6M1592 605.5h7M1594 635.5h9M1594 637.5h7M1602 637.5h3M1606 637.5h1M1594 647.5h8M1594 649.5h7M1594 655.5h3M1598 655.5h5M1604 655.5h3M1594 659.5h5M1594 663.5h4M1599 663.5h5M1605 663.5h2M1594 665.5h8M1594 667.5h4M1599 667.5h3M1603 667.5h3M1594 669.5h7M1602 669.5h3M1606 669.5h2M1594 673.5h6M1596 679.5h5M1596 681.5h10M1594 689.5h5M1594 691.5h5"/></g></g><rect x="1582" y="248" width="120" height="89" fill="rgba(121,121,121,0.2)"/><g fill="none" stroke="#ffffff" stroke-width="1.1"><circle cx="222.6" cy="977.4" r="1.8"/><circle cx="229.6" cy="979.6" r="1.8"/><circle cx="222.6" cy="986.8" r="1.8"/><path d="M222.6 979.2 V985 M229.6 981.4 C229.6 984 223.2 983 222.6 985"/></g><g fill="none" stroke="#ffffff" stroke-width="1.1"><path d="M293.4 981.2 A5.2 5.2 0 0 1 303.6 981.2 M303.6 983.6 A5.2 5.2 0 0 1 293.4 983.6"/></g><path d="M301.8 981 H305.8 L303.8 983.6 Z M291.2 983.8 H295.2 L293.2 981.2 Z" fill="#ffffff"/><g fill="none" stroke="#ffffff" stroke-width="1.1"><circle cx="328" cy="982.4" r="6"/><path d="M325.5 979.9 L330.5 984.9 M330.5 979.9 L325.5 984.9"/></g><g fill="none" stroke="#ffffff" stroke-width="1.1"><path d="M356.8 976.6 L362.6 987.2 H351 Z M356.8 980 V984 M356.8 985.2 V986.2"/></g><g fill="none" stroke="#ffffff" stroke-width="1.1"><path d="M1588 981.6 L1591 985.6 L1598.2 976.8 M1592.8 983.4 L1594.6 985.6 L1601.6 977"/></g><g fill="none" stroke="#ffffff" stroke-width="1.1"><circle cx="1661.6" cy="981" r="2.6"/><path d="M1657.4 988.4 C1657.6 985.4 1659.4 984.2 1661.6 984.2 C1663.8 984.2 1665.6 985.4 1665.8 988.4 M1663 976 H1670.4 V981.6 H1667.4 L1665.6 983.4"/></g><g fill="none" stroke="#ffffff" stroke-width="1.1"><path d="M1689 986 H1699 C1697.8 984.6 1697.6 983.4 1697.6 981.4 C1697.6 978.2 1696 976.2 1694 976.2 C1692 976.2 1690.4 978.2 1690.4 981.4 C1690.4 983.4 1690.2 984.6 1689 986 Z M1692.6 987 C1693 988.2 1695 988.2 1695.4 987"/></g></svg><div class="t" style="left:922.50px;top:90.67px;font-size:12.5px;color:#cccccc;letter-spacing:-0.031px;font-family:'Liberation Sans';">FoodItem.vue</div><div class="t" style="left:272.80px;top:120.23px;font-size:10.6px;color:#bbbbbb;letter-spacing:0.056px;font-family:'Liberation Sans';">EXPLORER: TIMELINE</div><div class="t" style="left:285.20px;top:148.70px;font-size:13px;color:#cccccc;letter-spacing:0.303px;font-family:'Liberation Sans';">Clean up console log stuff...</div><div class="t" style="left:458.60px;top:149.04px;font-size:12px;color:#a0a0a0;letter-spacing:0.661px;font-family:'Liberation Sans';">1 yr</div><div class="t" style="left:285.20px;top:170.70px;font-size:13px;color:#cccccc;letter-spacing:0.174px;font-family:'Liberation Sans';">Visual updates and fixes. ......</div><div class="t" style="left:285.20px;top:192.70px;font-size:13px;color:#cccccc;letter-spacing:0.385px;font-family:'Liberation Sans';">Style updates</div><div class="t" style="left:374.40px;top:193.04px;font-size:12px;color:#a0a0a0;letter-spacing:0.073px;font-family:'Liberation Sans';">Tanel Sepp</div><div class="t" style="left:285.20px;top:214.70px;font-size:13px;color:#cccccc;letter-spacing:0.258px;font-family:'Liberation Sans';">Prices - force always 2 plac...</div><div class="t" style="left:285.20px;top:236.70px;font-size:13px;color:#cccccc;letter-spacing:0.178px;font-family:'Liberation Sans';">...</div><div class="t" style="left:302.50px;top:237.04px;font-size:12px;color:#a0a0a0;letter-spacing:0.223px;font-family:'Liberation Sans';">Janar J</div><div class="t" style="left:285.20px;top:258.70px;font-size:13px;color:#cccccc;letter-spacing:0.279px;font-family:'Liberation Sans';">Sales price styles</div><div class="t" style="left:397.20px;top:259.04px;font-size:12px;color:#a0a0a0;letter-spacing:0.061px;font-family:'Liberation Sans';">Tanel Sepp</div><div class="t" style="left:285.20px;top:280.70px;font-size:13px;color:#cccccc;letter-spacing:0.317px;font-family:'Liberation Sans';">Food/Product component n...</div><div class="t" style="left:285.20px;top:302.70px;font-size:13px;color:#cccccc;letter-spacing:0.385px;font-family:'Liberation Sans';">Style updates</div><div class="t" style="left:374.40px;top:303.04px;font-size:12px;color:#a0a0a0;letter-spacing:0.073px;font-family:'Liberation Sans';">Tanel Sepp</div><div class="t" style="left:285.20px;top:324.70px;font-size:13px;color:#cccccc;letter-spacing:0.269px;font-family:'Liberation Sans';">Button stules. ...</div><div class="t" style="left:388.80px;top:325.04px;font-size:12px;color:#a0a0a0;letter-spacing:0.139px;font-family:'Liberation Sans';">Tanel Sepp</div><div class="t" style="left:285.20px;top:346.70px;font-size:13px;color:#cccccc;letter-spacing:0.359px;font-family:'Liberation Sans';">Shopping cart animation</div><div class="t" style="left:439.10px;top:347.04px;font-size:12px;color:#a0a0a0;letter-spacing:0.053px;font-family:'Liberation Sans';">Ta...</div><div class="t" style="left:285.20px;top:368.70px;font-size:13px;color:#cccccc;letter-spacing:0.259px;font-family:'Liberation Sans';">Demo easing</div><div class="t" style="left:370.20px;top:369.04px;font-size:12px;color:#a0a0a0;letter-spacing:0.073px;font-family:'Liberation Sans';">Tanel Sepp</div><div class="t" style="left:285.20px;top:390.70px;font-size:13px;color:#cccccc;letter-spacing:0.305px;font-family:'Liberation Sans';">Animate shopping cart icon...</div><div class="t" style="left:285.20px;top:412.70px;font-size:13px;color:#cccccc;letter-spacing:0.146px;font-family:'Liberation Sans';">Added GSAP for animation. ...</div><div class="t" style="left:285.20px;top:434.70px;font-size:13px;color:#cccccc;letter-spacing:0.269px;font-family:'Liberation Sans';">Update config to new API (u...</div><div class="t" style="left:285.20px;top:456.70px;font-size:13px;color:#cccccc;letter-spacing:0.283px;font-family:'Liberation Sans';">ShoppingCart: add basic fu...</div><div class="t" style="left:285.20px;top:478.70px;font-size:13px;color:#cccccc;letter-spacing:0.385px;font-family:'Liberation Sans';">Beautify code</div><div class="t" style="left:375.00px;top:479.04px;font-size:12px;color:#a0a0a0;letter-spacing:0.073px;font-family:'Liberation Sans';">Tanel Sepp</div><div class="t" style="left:285.20px;top:500.70px;font-size:13px;color:#cccccc;letter-spacing:0.469px;font-family:'Liberation Sans';">Shopping cart button</div><div class="t" style="left:420.50px;top:501.04px;font-size:12px;color:#a0a0a0;letter-spacing:0.009px;font-family:'Liberation Sans';">Tanel ...</div><div class="t" style="left:285.20px;top:522.70px;font-size:13px;color:#cccccc;letter-spacing:0.259px;font-family:'Liberation Sans';">Hover popover in food it...</div><div class="t" style="left:450.60px;top:523.04px;font-size:12px;color:#a0a0a0;letter-spacing:0.896px;font-family:'Liberation Sans';">2 yrs</div><div class="t" style="left:285.20px;top:544.70px;font-size:13px;color:#cccccc;letter-spacing:0.282px;font-family:'Liberation Sans';">Updated food menu margins...</div><div class="t" style="left:285.20px;top:566.70px;font-size:13px;color:#cccccc;letter-spacing:0.275px;font-family:'Liberation Sans';">Created Modal component, ...</div><div class="t" style="left:263.50px;top:588.27px;font-size:12.5px;color:#cccccc;letter-spacing:0.554px;font-family:'Liberation Sans';">Load more</div><div class="t" style="left:528.70px;top:119.90px;font-size:13px;color:#ffffff;letter-spacing:0.136px;font-family:'Liberation Sans';">FoodItem.vue</div><div class="t" style="left:512.30px;top:148.50px;font-size:13px;color:#a9a9a9;letter-spacing:0.312px;font-family:'Liberation Sans';">Users</div><div class="t" style="left:562.90px;top:148.50px;font-size:13px;color:#a9a9a9;letter-spacing:0.439px;font-family:'Liberation Sans';">tanelsepp</div><div class="t" style="left:638.30px;top:148.50px;font-size:13px;color:#a9a9a9;letter-spacing:0.469px;font-family:'Liberation Sans';">Documents</div><div class="t" style="left:723.80px;top:148.50px;font-size:13px;color:#a9a9a9;letter-spacing:-0.309px;font-family:'Liberation Sans';">PROJEKTID</div><div class="t" style="left:810.20px;top:148.50px;font-size:13px;color:#a9a9a9;letter-spacing:0.637px;font-family:'Liberation Sans';">wwwroot</div><div class="t" style="left:881.30px;top:148.50px;font-size:13px;color:#a9a9a9;letter-spacing:0.192px;font-family:'Liberation Sans';">HepaPood</div><div class="t" style="left:960.00px;top:148.50px;font-size:13px;color:#a9a9a9;letter-spacing:0.728px;font-family:'Liberation Sans';">src</div><div class="t" style="left:994.40px;top:148.50px;font-size:13px;color:#a9a9a9;letter-spacing:0.530px;font-family:'Liberation Sans';">components</div><div class="t" style="left:1085.40px;top:148.50px;font-size:13px;color:#a9a9a9;letter-spacing:0.406px;font-family:'Liberation Sans';">FoodMenu</div><div class="t" style="left:1187.50px;top:148.50px;font-size:13px;color:#a9a9a9;letter-spacing:0.227px;font-family:'Liberation Sans';">FoodItem.vue</div><div class="t" style="left:236.90px;top:973.64px;font-size:12px;color:#ffffff;letter-spacing:0.402px;font-family:'Liberation Sans';">master</div><div class="t" style="left:339.00px;top:973.64px;font-size:12px;color:#ffffff;letter-spacing:1.112px;font-family:'Liberation Sans';">0</div><div class="t" style="left:367.10px;top:973.64px;font-size:12px;color:#ffffff;letter-spacing:1.212px;font-family:'Liberation Sans';">0</div><div class="t" style="left:1323.30px;top:973.64px;font-size:12px;color:#ffffff;letter-spacing:-0.095px;font-family:'Liberation Sans';">Ln 1, Col 1</div><div class="t" style="left:1396.80px;top:973.64px;font-size:12px;color:#ffffff;letter-spacing:0.191px;font-family:'Liberation Sans';">Spaces: 2</div><div class="t" style="left:1468.10px;top:973.64px;font-size:12px;color:#ffffff;letter-spacing:0.550px;font-family:'Liberation Sans';">UTF-8</div><div class="t" style="left:1520.40px;top:973.64px;font-size:12px;color:#ffffff;letter-spacing:0.384px;font-family:'Liberation Sans';">LF</div><div class="t" style="left:1550.10px;top:973.64px;font-size:12px;color:#ffffff;letter-spacing:0.347px;font-family:'Liberation Sans';">Vue</div><div class="t" style="left:1605.30px;top:973.64px;font-size:12px;color:#ffffff;letter-spacing:0.168px;font-family:'Liberation Sans';">ESLint</div></div><div class="r" style="left:0;top:0;width:1512px;height:905px;border-radius:5px;box-shadow:inset -1px 0 0 rgba(255,255,255,0.2), inset 0 -1px 0 rgba(255,255,255,0.25)"></div></div><div class="r" style="left:203px;top:618px;width:1px;height:166px;background:#161a3a"></div></body></html>
